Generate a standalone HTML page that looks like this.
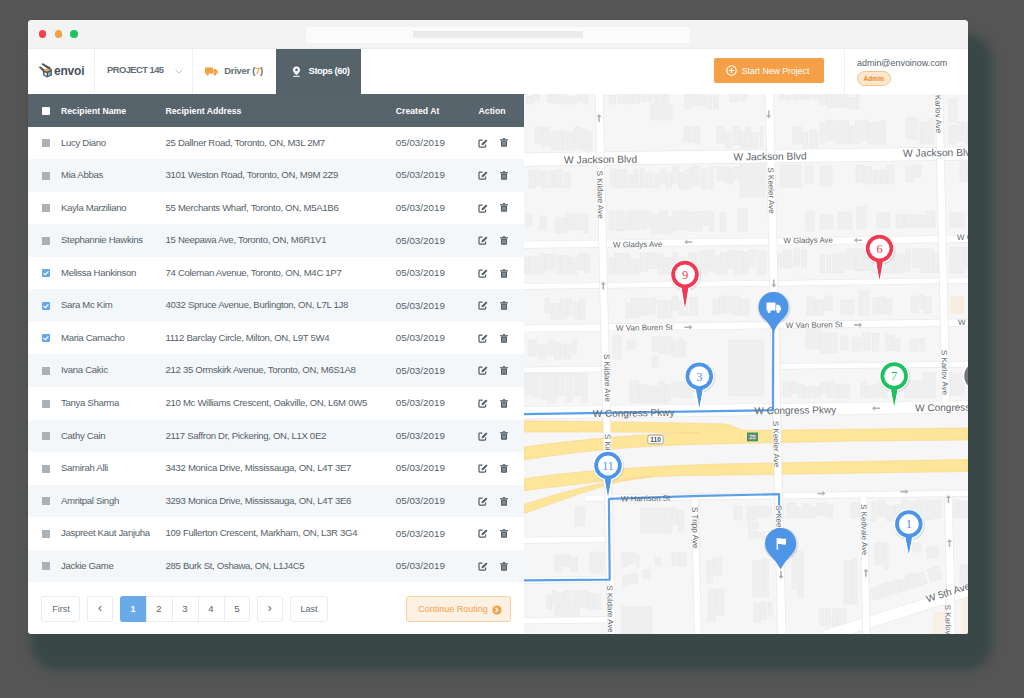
<!DOCTYPE html>
<html><head><meta charset="utf-8">
<style>
*{margin:0;padding:0;box-sizing:border-box}
html,body{width:1024px;height:698px;overflow:hidden;background:#555555;font-family:"Liberation Sans",sans-serif}
.abs{position:absolute}
#win{position:absolute;left:28px;top:20px;width:940px;height:614px;background:#fff;border-radius:4px 4px 3px 3px;;overflow:hidden}
#title{position:absolute;left:0;top:0;width:940px;height:29px;background:#f3f3f3;border-bottom:1px solid #ececec}
.dot{position:absolute;top:10.2px;width:7.6px;height:7.6px;border-radius:50%}
#addr{position:absolute;left:277.6px;top:6.6px;width:384.4px;height:16.4px;background:#fbfbfb;border-radius:2px}
#addr i{position:absolute;left:107.4px;top:4.7px;width:170px;height:7px;background:#ebebeb}
#nav{position:absolute;left:0;top:29px;width:940px;height:45px;background:#fff}
.vd{position:absolute;top:0;width:1px;height:45px;background:#eef0f2}
.navt{position:absolute;font-size:9.6px;color:#5d6970;white-space:nowrap;line-height:10px}
#thead{position:absolute;left:0;top:74px;width:496px;height:32.5px;background:#57646b}
.th{position:absolute;top:12px;font-size:8.7px;font-weight:bold;color:#fff;line-height:10px;white-space:nowrap}
.row{position:absolute;left:0;width:496px;height:32.6px}
.row.alt{background:#f4f7f9}
.td{position:absolute;font-size:9.6px;letter-spacing:-0.32px;color:#56626a;line-height:10px;white-space:nowrap;top:11px}
.cb{position:absolute;left:13.5px;top:12.5px;width:8px;height:8px}
#map{position:absolute;left:496px;top:74px;width:444px;height:540px;background:#f3f3f3;overflow:hidden}
.pg{position:absolute;top:575.8px;height:26.2px;border:1px solid #e8ecef;border-radius:3px;background:#fff;font-size:9px;color:#5e6a72;text-align:center;line-height:24px}
</style></head><body>
<div style="position:absolute;left:31px;top:34px;width:961px;height:636px;border-radius:26px;background:#394747;filter:blur(5px)"></div>
<div id="win">
  <div id="title">
    <div class="dot" style="left:10.9px;background:#f4404f"></div>
    <div class="dot" style="left:26.6px;background:#f5a043"></div>
    <div class="dot" style="left:42.2px;background:#1fc160"></div>
    <div id="addr"><i></i></div>
  </div>
  <div id="nav">
    <div class="vd" style="left:65.5px"></div>
    <div class="vd" style="left:163.8px"></div>
    <div class="vd" style="left:815.5px"></div>
    <!-- logo -->
    <svg class="abs" style="left:8px;top:11px" width="20" height="20" viewBox="0 0 20 20">
      <path d="M5,4 L7,3.3 L14.5,7.6 L12.5,9.2 Z" fill="#4a565e"/>
      <path d="M2.6,7 L4.6,6.4 L9.6,10.6 L7.4,11.8 Z" fill="#4a565e"/>
      <path d="M6.8,10.8 L14,7.8 L15.9,9.6 L15.9,15.4 L11,17.6 L7.2,15.2 Z" fill="#4a565e"/>
      <path d="M8.2,9.8 L10.8,8.4 L13.6,8.9 L14.4,10.3 L11.4,11.6 L8.1,11.1 Z" fill="#f5a043"/>
      <path d="M8.4,12.2 L10.8,13 L10.8,16.1 L8.4,15 Z" fill="#dfe5ea"/>
      <path d="M12,12.8 L14.6,11.7 L14.6,14.9 L12,16 Z" fill="#7ab8ee"/>
    </svg>
    <div class="navt" style="left:26px;top:17px;font-size:12px;font-weight:bold;color:#47535b;letter-spacing:-0.2px">envoi</div>
    <div class="navt" style="left:79px;top:15.8px;font-weight:bold;font-size:9.4px;letter-spacing:-0.55px;color:#626e76">PROJECT 145</div>
    <svg class="abs" style="left:147px;top:19.8px" width="8" height="5" viewBox="0 0 8 5"><path d="M0.5 0.5 L4 4 L7.5 0.5" fill="none" stroke="#b9c0c5" stroke-width="1"/></svg>
    <!-- truck -->
    <svg class="abs" style="left:177px;top:17.5px" width="13" height="9" viewBox="0 0 13 9">
      <rect x="0" y="0.5" width="8" height="6" fill="#f5a043"/>
      <path d="M8.5 2 L11 2 L12.8 4.5 L12.8 6.5 L8.5 6.5 Z" fill="#f5a043"/>
      <circle cx="2.5" cy="7.2" r="1.3" fill="#f5a043"/><circle cx="10" cy="7.2" r="1.3" fill="#f5a043"/>
    </svg>
    <div class="navt" style="left:196.3px;top:16.5px;color:#626e76;font-weight:bold;font-size:9.4px;letter-spacing:-0.25px">Driver (<span style="color:#f5a043">7</span>)</div>
    <!-- active tab -->
    <div class="abs" style="left:248px;top:0;width:85px;height:45px;background:#56636b">
      <svg class="abs" style="left:15.5px;top:17px" width="9" height="11" viewBox="0 0 9 11">
        <path d="M4.5 0.5 C2.3 0.5 1 2.1 1 3.9 C1 6.2 4.5 9 4.5 9 C4.5 9 8 6.2 8 3.9 C8 2.1 6.7 0.5 4.5 0.5 Z" fill="#fff"/>
        <circle cx="4.5" cy="3.9" r="1.3" fill="#56636b"/>
        <rect x="1.3" y="9.8" width="6.4" height="1" fill="#fff"/>
      </svg>
      <div class="navt" style="left:32.6px;top:16.7px;color:#fff;font-weight:bold;font-size:9.4px;letter-spacing:-0.45px">Stops (60)</div>
    </div>
    <!-- start new project -->
    <div class="abs" style="left:686px;top:9.2px;width:110px;height:25.3px;background:#f5a047;border-radius:2px">
      <svg class="abs" style="left:11.5px;top:7.2px" width="11" height="11" viewBox="0 0 11 11">
        <circle cx="5.5" cy="5.5" r="4.7" fill="none" stroke="#fff" stroke-width="1.1"/>
        <path d="M5.5 3 V8 M3 5.5 H8" stroke="#fff" stroke-width="1.2"/>
      </svg>
      <div class="navt" style="left:27.7px;top:8px;color:#fff;font-size:8.8px;letter-spacing:-0.05px">Start New Project</div>
    </div>
    <div class="navt" style="left:829px;top:8.8px;font-size:9px;letter-spacing:-0.03px;color:#56626a">admin@envoinow.com</div>
    <div class="abs" style="left:828.7px;top:22.2px;width:34.3px;height:15px;background:#fde8cf;border:1px solid #f7c489;border-radius:8px;font-size:6.6px;font-weight:bold;color:#ea8a2a;text-align:center;line-height:13px">Admin</div>
  </div>
  <!-- table header -->
  <div id="thead">
    <div class="abs" style="left:13.5px;top:12.5px;width:8px;height:8px;background:#fff;border-radius:1px"></div>
    <div class="th" style="left:33px">Recipient Name</div>
    <div class="th" style="left:137.5px">Recipient Address</div>
    <div class="th" style="left:367.8px">Created At</div>
    <div class="th" style="left:450.6px">Action</div>
  </div>
  <div id="rows"><div class="row" style="top:106.50px;height:32.57px"><div class="cb" style="background:#abb1b5"></div><div class="td" style="left:33px">Lucy Diano</div><div class="td" style="left:137.5px">25 Dallner Road, Toronto, ON, M3L 2M7</div><div class="td" style="left:367.8px;font-size:9.8px;letter-spacing:0;top:11.3px">05/03/2019</div><svg class="abs" style="left:450px;top:12px" width="10" height="9" viewBox="0 0 10 9"><path d="M4.5 1.2 H1.8 Q1 1.2 1 2 V7.3 Q1 8.1 1.8 8.1 H6.8 Q7.6 8.1 7.6 7.3 V5.5" fill="none" stroke="#505c64" stroke-width="1.2"/><path d="M3.6 6.2 L3.9 4.6 L8.1 0.4 L9.5 1.8 L5.3 6 Z" fill="#505c64"/></svg><svg class="abs" style="left:472.3px;top:11.8px" width="8" height="9" viewBox="0 0 8 9"><rect x="0" y="1.2" width="8" height="1.1" fill="#505c64"/><rect x="2.8" y="0.2" width="2.4" height="1.2" fill="#505c64"/><path d="M1 2.6 H7 V8 Q7 8.7 6.3 8.7 H1.7 Q1 8.7 1 8 Z" fill="#505c64"/><rect x="2.4" y="3.6" width="1.1" height="4" fill="#a9b0b5"/><rect x="4.5" y="3.6" width="1.1" height="4" fill="#a9b0b5"/></svg></div><div class="row alt" style="top:139.07px;height:32.57px"><div class="cb" style="background:#abb1b5"></div><div class="td" style="left:33px">Mia Abbas</div><div class="td" style="left:137.5px">3101 Weston Road, Toronto, ON, M9M 2Z9</div><div class="td" style="left:367.8px;font-size:9.8px;letter-spacing:0;top:11.3px">05/03/2019</div><svg class="abs" style="left:450px;top:12px" width="10" height="9" viewBox="0 0 10 9"><path d="M4.5 1.2 H1.8 Q1 1.2 1 2 V7.3 Q1 8.1 1.8 8.1 H6.8 Q7.6 8.1 7.6 7.3 V5.5" fill="none" stroke="#505c64" stroke-width="1.2"/><path d="M3.6 6.2 L3.9 4.6 L8.1 0.4 L9.5 1.8 L5.3 6 Z" fill="#505c64"/></svg><svg class="abs" style="left:472.3px;top:11.8px" width="8" height="9" viewBox="0 0 8 9"><rect x="0" y="1.2" width="8" height="1.1" fill="#505c64"/><rect x="2.8" y="0.2" width="2.4" height="1.2" fill="#505c64"/><path d="M1 2.6 H7 V8 Q7 8.7 6.3 8.7 H1.7 Q1 8.7 1 8 Z" fill="#505c64"/><rect x="2.4" y="3.6" width="1.1" height="4" fill="#a9b0b5"/><rect x="4.5" y="3.6" width="1.1" height="4" fill="#a9b0b5"/></svg></div><div class="row" style="top:171.64px;height:32.57px"><div class="cb" style="background:#abb1b5"></div><div class="td" style="left:33px">Kayla Marziliano</div><div class="td" style="left:137.5px">55 Merchants Wharf, Toronto, ON, M5A1B6</div><div class="td" style="left:367.8px;font-size:9.8px;letter-spacing:0;top:11.3px">05/03/2019</div><svg class="abs" style="left:450px;top:12px" width="10" height="9" viewBox="0 0 10 9"><path d="M4.5 1.2 H1.8 Q1 1.2 1 2 V7.3 Q1 8.1 1.8 8.1 H6.8 Q7.6 8.1 7.6 7.3 V5.5" fill="none" stroke="#505c64" stroke-width="1.2"/><path d="M3.6 6.2 L3.9 4.6 L8.1 0.4 L9.5 1.8 L5.3 6 Z" fill="#505c64"/></svg><svg class="abs" style="left:472.3px;top:11.8px" width="8" height="9" viewBox="0 0 8 9"><rect x="0" y="1.2" width="8" height="1.1" fill="#505c64"/><rect x="2.8" y="0.2" width="2.4" height="1.2" fill="#505c64"/><path d="M1 2.6 H7 V8 Q7 8.7 6.3 8.7 H1.7 Q1 8.7 1 8 Z" fill="#505c64"/><rect x="2.4" y="3.6" width="1.1" height="4" fill="#a9b0b5"/><rect x="4.5" y="3.6" width="1.1" height="4" fill="#a9b0b5"/></svg></div><div class="row alt" style="top:204.21px;height:32.57px"><div class="cb" style="background:#abb1b5"></div><div class="td" style="left:33px">Stephannie Hawkins</div><div class="td" style="left:137.5px">15 Neepawa Ave, Toronto, ON, M6R1V1</div><div class="td" style="left:367.8px;font-size:9.8px;letter-spacing:0;top:11.3px">05/03/2019</div><svg class="abs" style="left:450px;top:12px" width="10" height="9" viewBox="0 0 10 9"><path d="M4.5 1.2 H1.8 Q1 1.2 1 2 V7.3 Q1 8.1 1.8 8.1 H6.8 Q7.6 8.1 7.6 7.3 V5.5" fill="none" stroke="#505c64" stroke-width="1.2"/><path d="M3.6 6.2 L3.9 4.6 L8.1 0.4 L9.5 1.8 L5.3 6 Z" fill="#505c64"/></svg><svg class="abs" style="left:472.3px;top:11.8px" width="8" height="9" viewBox="0 0 8 9"><rect x="0" y="1.2" width="8" height="1.1" fill="#505c64"/><rect x="2.8" y="0.2" width="2.4" height="1.2" fill="#505c64"/><path d="M1 2.6 H7 V8 Q7 8.7 6.3 8.7 H1.7 Q1 8.7 1 8 Z" fill="#505c64"/><rect x="2.4" y="3.6" width="1.1" height="4" fill="#a9b0b5"/><rect x="4.5" y="3.6" width="1.1" height="4" fill="#a9b0b5"/></svg></div><div class="row" style="top:236.78px;height:32.57px"><svg class="cb" width="8" height="8" viewBox="0 0 8 8"><rect width="8" height="8" rx="0.8" fill="#68a8e6"/><path d="M1.6 4.1 L3.3 5.7 L6.4 2.3" fill="none" stroke="#fff" stroke-width="1.2"/></svg><div class="td" style="left:33px">Melissa Hankinson</div><div class="td" style="left:137.5px">74 Coleman Avenue, Toronto, ON, M4C 1P7</div><div class="td" style="left:367.8px;font-size:9.8px;letter-spacing:0;top:11.3px">05/03/2019</div><svg class="abs" style="left:450px;top:12px" width="10" height="9" viewBox="0 0 10 9"><path d="M4.5 1.2 H1.8 Q1 1.2 1 2 V7.3 Q1 8.1 1.8 8.1 H6.8 Q7.6 8.1 7.6 7.3 V5.5" fill="none" stroke="#505c64" stroke-width="1.2"/><path d="M3.6 6.2 L3.9 4.6 L8.1 0.4 L9.5 1.8 L5.3 6 Z" fill="#505c64"/></svg><svg class="abs" style="left:472.3px;top:11.8px" width="8" height="9" viewBox="0 0 8 9"><rect x="0" y="1.2" width="8" height="1.1" fill="#505c64"/><rect x="2.8" y="0.2" width="2.4" height="1.2" fill="#505c64"/><path d="M1 2.6 H7 V8 Q7 8.7 6.3 8.7 H1.7 Q1 8.7 1 8 Z" fill="#505c64"/><rect x="2.4" y="3.6" width="1.1" height="4" fill="#a9b0b5"/><rect x="4.5" y="3.6" width="1.1" height="4" fill="#a9b0b5"/></svg></div><div class="row alt" style="top:269.35px;height:32.57px"><svg class="cb" width="8" height="8" viewBox="0 0 8 8"><rect width="8" height="8" rx="0.8" fill="#68a8e6"/><path d="M1.6 4.1 L3.3 5.7 L6.4 2.3" fill="none" stroke="#fff" stroke-width="1.2"/></svg><div class="td" style="left:33px">Sara Mc Kim</div><div class="td" style="left:137.5px">4032 Spruce Avenue, Burlington, ON, L7L 1J8</div><div class="td" style="left:367.8px;font-size:9.8px;letter-spacing:0;top:11.3px">05/03/2019</div><svg class="abs" style="left:450px;top:12px" width="10" height="9" viewBox="0 0 10 9"><path d="M4.5 1.2 H1.8 Q1 1.2 1 2 V7.3 Q1 8.1 1.8 8.1 H6.8 Q7.6 8.1 7.6 7.3 V5.5" fill="none" stroke="#505c64" stroke-width="1.2"/><path d="M3.6 6.2 L3.9 4.6 L8.1 0.4 L9.5 1.8 L5.3 6 Z" fill="#505c64"/></svg><svg class="abs" style="left:472.3px;top:11.8px" width="8" height="9" viewBox="0 0 8 9"><rect x="0" y="1.2" width="8" height="1.1" fill="#505c64"/><rect x="2.8" y="0.2" width="2.4" height="1.2" fill="#505c64"/><path d="M1 2.6 H7 V8 Q7 8.7 6.3 8.7 H1.7 Q1 8.7 1 8 Z" fill="#505c64"/><rect x="2.4" y="3.6" width="1.1" height="4" fill="#a9b0b5"/><rect x="4.5" y="3.6" width="1.1" height="4" fill="#a9b0b5"/></svg></div><div class="row" style="top:301.92px;height:32.57px"><svg class="cb" width="8" height="8" viewBox="0 0 8 8"><rect width="8" height="8" rx="0.8" fill="#68a8e6"/><path d="M1.6 4.1 L3.3 5.7 L6.4 2.3" fill="none" stroke="#fff" stroke-width="1.2"/></svg><div class="td" style="left:33px">Maria Camacho</div><div class="td" style="left:137.5px">1112 Barclay Circle, Milton, ON, L9T 5W4</div><div class="td" style="left:367.8px;font-size:9.8px;letter-spacing:0;top:11.3px">05/03/2019</div><svg class="abs" style="left:450px;top:12px" width="10" height="9" viewBox="0 0 10 9"><path d="M4.5 1.2 H1.8 Q1 1.2 1 2 V7.3 Q1 8.1 1.8 8.1 H6.8 Q7.6 8.1 7.6 7.3 V5.5" fill="none" stroke="#505c64" stroke-width="1.2"/><path d="M3.6 6.2 L3.9 4.6 L8.1 0.4 L9.5 1.8 L5.3 6 Z" fill="#505c64"/></svg><svg class="abs" style="left:472.3px;top:11.8px" width="8" height="9" viewBox="0 0 8 9"><rect x="0" y="1.2" width="8" height="1.1" fill="#505c64"/><rect x="2.8" y="0.2" width="2.4" height="1.2" fill="#505c64"/><path d="M1 2.6 H7 V8 Q7 8.7 6.3 8.7 H1.7 Q1 8.7 1 8 Z" fill="#505c64"/><rect x="2.4" y="3.6" width="1.1" height="4" fill="#a9b0b5"/><rect x="4.5" y="3.6" width="1.1" height="4" fill="#a9b0b5"/></svg></div><div class="row alt" style="top:334.49px;height:32.57px"><div class="cb" style="background:#abb1b5"></div><div class="td" style="left:33px">Ivana Cakic</div><div class="td" style="left:137.5px">212 35 Ormskirk Avenue, Toronto, ON, M6S1A8</div><div class="td" style="left:367.8px;font-size:9.8px;letter-spacing:0;top:11.3px">05/03/2019</div><svg class="abs" style="left:450px;top:12px" width="10" height="9" viewBox="0 0 10 9"><path d="M4.5 1.2 H1.8 Q1 1.2 1 2 V7.3 Q1 8.1 1.8 8.1 H6.8 Q7.6 8.1 7.6 7.3 V5.5" fill="none" stroke="#505c64" stroke-width="1.2"/><path d="M3.6 6.2 L3.9 4.6 L8.1 0.4 L9.5 1.8 L5.3 6 Z" fill="#505c64"/></svg><svg class="abs" style="left:472.3px;top:11.8px" width="8" height="9" viewBox="0 0 8 9"><rect x="0" y="1.2" width="8" height="1.1" fill="#505c64"/><rect x="2.8" y="0.2" width="2.4" height="1.2" fill="#505c64"/><path d="M1 2.6 H7 V8 Q7 8.7 6.3 8.7 H1.7 Q1 8.7 1 8 Z" fill="#505c64"/><rect x="2.4" y="3.6" width="1.1" height="4" fill="#a9b0b5"/><rect x="4.5" y="3.6" width="1.1" height="4" fill="#a9b0b5"/></svg></div><div class="row" style="top:367.06px;height:32.57px"><div class="cb" style="background:#abb1b5"></div><div class="td" style="left:33px">Tanya Sharma</div><div class="td" style="left:137.5px">210 Mc Williams Crescent, Oakville, ON, L6M 0W5</div><div class="td" style="left:367.8px;font-size:9.8px;letter-spacing:0;top:11.3px">05/03/2019</div><svg class="abs" style="left:450px;top:12px" width="10" height="9" viewBox="0 0 10 9"><path d="M4.5 1.2 H1.8 Q1 1.2 1 2 V7.3 Q1 8.1 1.8 8.1 H6.8 Q7.6 8.1 7.6 7.3 V5.5" fill="none" stroke="#505c64" stroke-width="1.2"/><path d="M3.6 6.2 L3.9 4.6 L8.1 0.4 L9.5 1.8 L5.3 6 Z" fill="#505c64"/></svg><svg class="abs" style="left:472.3px;top:11.8px" width="8" height="9" viewBox="0 0 8 9"><rect x="0" y="1.2" width="8" height="1.1" fill="#505c64"/><rect x="2.8" y="0.2" width="2.4" height="1.2" fill="#505c64"/><path d="M1 2.6 H7 V8 Q7 8.7 6.3 8.7 H1.7 Q1 8.7 1 8 Z" fill="#505c64"/><rect x="2.4" y="3.6" width="1.1" height="4" fill="#a9b0b5"/><rect x="4.5" y="3.6" width="1.1" height="4" fill="#a9b0b5"/></svg></div><div class="row alt" style="top:399.63px;height:32.57px"><div class="cb" style="background:#abb1b5"></div><div class="td" style="left:33px">Cathy Cain</div><div class="td" style="left:137.5px">2117 Saffron Dr, Pickering, ON, L1X 0E2</div><div class="td" style="left:367.8px;font-size:9.8px;letter-spacing:0;top:11.3px">05/03/2019</div><svg class="abs" style="left:450px;top:12px" width="10" height="9" viewBox="0 0 10 9"><path d="M4.5 1.2 H1.8 Q1 1.2 1 2 V7.3 Q1 8.1 1.8 8.1 H6.8 Q7.6 8.1 7.6 7.3 V5.5" fill="none" stroke="#505c64" stroke-width="1.2"/><path d="M3.6 6.2 L3.9 4.6 L8.1 0.4 L9.5 1.8 L5.3 6 Z" fill="#505c64"/></svg><svg class="abs" style="left:472.3px;top:11.8px" width="8" height="9" viewBox="0 0 8 9"><rect x="0" y="1.2" width="8" height="1.1" fill="#505c64"/><rect x="2.8" y="0.2" width="2.4" height="1.2" fill="#505c64"/><path d="M1 2.6 H7 V8 Q7 8.7 6.3 8.7 H1.7 Q1 8.7 1 8 Z" fill="#505c64"/><rect x="2.4" y="3.6" width="1.1" height="4" fill="#a9b0b5"/><rect x="4.5" y="3.6" width="1.1" height="4" fill="#a9b0b5"/></svg></div><div class="row" style="top:432.20px;height:32.57px"><div class="cb" style="background:#abb1b5"></div><div class="td" style="left:33px">Samirah Alli</div><div class="td" style="left:137.5px">3432 Monica Drive, Mississauga, ON, L4T 3E7</div><div class="td" style="left:367.8px;font-size:9.8px;letter-spacing:0;top:11.3px">05/03/2019</div><svg class="abs" style="left:450px;top:12px" width="10" height="9" viewBox="0 0 10 9"><path d="M4.5 1.2 H1.8 Q1 1.2 1 2 V7.3 Q1 8.1 1.8 8.1 H6.8 Q7.6 8.1 7.6 7.3 V5.5" fill="none" stroke="#505c64" stroke-width="1.2"/><path d="M3.6 6.2 L3.9 4.6 L8.1 0.4 L9.5 1.8 L5.3 6 Z" fill="#505c64"/></svg><svg class="abs" style="left:472.3px;top:11.8px" width="8" height="9" viewBox="0 0 8 9"><rect x="0" y="1.2" width="8" height="1.1" fill="#505c64"/><rect x="2.8" y="0.2" width="2.4" height="1.2" fill="#505c64"/><path d="M1 2.6 H7 V8 Q7 8.7 6.3 8.7 H1.7 Q1 8.7 1 8 Z" fill="#505c64"/><rect x="2.4" y="3.6" width="1.1" height="4" fill="#a9b0b5"/><rect x="4.5" y="3.6" width="1.1" height="4" fill="#a9b0b5"/></svg></div><div class="row alt" style="top:464.77px;height:32.57px"><div class="cb" style="background:#abb1b5"></div><div class="td" style="left:33px">Amritpal Singh</div><div class="td" style="left:137.5px">3293 Monica Drive, Mississauga, ON, L4T 3E6</div><div class="td" style="left:367.8px;font-size:9.8px;letter-spacing:0;top:11.3px">05/03/2019</div><svg class="abs" style="left:450px;top:12px" width="10" height="9" viewBox="0 0 10 9"><path d="M4.5 1.2 H1.8 Q1 1.2 1 2 V7.3 Q1 8.1 1.8 8.1 H6.8 Q7.6 8.1 7.6 7.3 V5.5" fill="none" stroke="#505c64" stroke-width="1.2"/><path d="M3.6 6.2 L3.9 4.6 L8.1 0.4 L9.5 1.8 L5.3 6 Z" fill="#505c64"/></svg><svg class="abs" style="left:472.3px;top:11.8px" width="8" height="9" viewBox="0 0 8 9"><rect x="0" y="1.2" width="8" height="1.1" fill="#505c64"/><rect x="2.8" y="0.2" width="2.4" height="1.2" fill="#505c64"/><path d="M1 2.6 H7 V8 Q7 8.7 6.3 8.7 H1.7 Q1 8.7 1 8 Z" fill="#505c64"/><rect x="2.4" y="3.6" width="1.1" height="4" fill="#a9b0b5"/><rect x="4.5" y="3.6" width="1.1" height="4" fill="#a9b0b5"/></svg></div><div class="row" style="top:497.34px;height:32.57px"><div class="cb" style="background:#abb1b5"></div><div class="td" style="left:33px">Jaspreet Kaut Janjuha</div><div class="td" style="left:137.5px">109 Fullerton Crescent, Markham, ON, L3R 3G4</div><div class="td" style="left:367.8px;font-size:9.8px;letter-spacing:0;top:11.3px">05/03/2019</div><svg class="abs" style="left:450px;top:12px" width="10" height="9" viewBox="0 0 10 9"><path d="M4.5 1.2 H1.8 Q1 1.2 1 2 V7.3 Q1 8.1 1.8 8.1 H6.8 Q7.6 8.1 7.6 7.3 V5.5" fill="none" stroke="#505c64" stroke-width="1.2"/><path d="M3.6 6.2 L3.9 4.6 L8.1 0.4 L9.5 1.8 L5.3 6 Z" fill="#505c64"/></svg><svg class="abs" style="left:472.3px;top:11.8px" width="8" height="9" viewBox="0 0 8 9"><rect x="0" y="1.2" width="8" height="1.1" fill="#505c64"/><rect x="2.8" y="0.2" width="2.4" height="1.2" fill="#505c64"/><path d="M1 2.6 H7 V8 Q7 8.7 6.3 8.7 H1.7 Q1 8.7 1 8 Z" fill="#505c64"/><rect x="2.4" y="3.6" width="1.1" height="4" fill="#a9b0b5"/><rect x="4.5" y="3.6" width="1.1" height="4" fill="#a9b0b5"/></svg></div><div class="row alt" style="top:529.91px;height:32.57px"><div class="cb" style="background:#abb1b5"></div><div class="td" style="left:33px">Jackie Game</div><div class="td" style="left:137.5px">285 Burk St, Oshawa, ON, L1J4C5</div><div class="td" style="left:367.8px;font-size:9.8px;letter-spacing:0;top:11.3px">05/03/2019</div><svg class="abs" style="left:450px;top:12px" width="10" height="9" viewBox="0 0 10 9"><path d="M4.5 1.2 H1.8 Q1 1.2 1 2 V7.3 Q1 8.1 1.8 8.1 H6.8 Q7.6 8.1 7.6 7.3 V5.5" fill="none" stroke="#505c64" stroke-width="1.2"/><path d="M3.6 6.2 L3.9 4.6 L8.1 0.4 L9.5 1.8 L5.3 6 Z" fill="#505c64"/></svg><svg class="abs" style="left:472.3px;top:11.8px" width="8" height="9" viewBox="0 0 8 9"><rect x="0" y="1.2" width="8" height="1.1" fill="#505c64"/><rect x="2.8" y="0.2" width="2.4" height="1.2" fill="#505c64"/><path d="M1 2.6 H7 V8 Q7 8.7 6.3 8.7 H1.7 Q1 8.7 1 8 Z" fill="#505c64"/><rect x="2.4" y="3.6" width="1.1" height="4" fill="#a9b0b5"/><rect x="4.5" y="3.6" width="1.1" height="4" fill="#a9b0b5"/></svg></div></div>
  <!-- pagination -->
  <div class="pg" style="left:13.4px;width:39.1px">First</div>
  <div class="pg" style="left:59px;width:26px;font-size:12px;line-height:23px">&#8249;</div>
  <div class="pg" style="left:92px;width:130px;padding:0"></div>
  <div class="abs" style="left:92px;top:575.8px;width:26px;height:26.2px;background:#6aaae8;border-radius:3px 0 0 3px;color:#fff;font-size:9px;font-weight:bold;text-align:center;line-height:26px">1</div>
  <div class="abs" style="left:118px;top:575.8px;width:1px;height:26.2px;background:#e8ecef"></div>
  <div class="abs" style="left:144px;top:575.8px;width:1px;height:26.2px;background:#e8ecef"></div>
  <div class="abs" style="left:170px;top:575.8px;width:1px;height:26.2px;background:#e8ecef"></div>
  <div class="abs" style="left:196px;top:575.8px;width:1px;height:26.2px;background:#e8ecef"></div>
  <div class="abs" style="left:118px;top:575.8px;width:26px;font-size:9.5px;color:#56626a;text-align:center;line-height:25px">2</div>
  <div class="abs" style="left:144px;top:575.8px;width:26px;font-size:9.5px;color:#56626a;text-align:center;line-height:25px">3</div>
  <div class="abs" style="left:170px;top:575.8px;width:26px;font-size:9.5px;color:#56626a;text-align:center;line-height:25px">4</div>
  <div class="abs" style="left:196px;top:575.8px;width:26px;font-size:9.5px;color:#56626a;text-align:center;line-height:25px">5</div>
  <div class="pg" style="left:228.8px;width:26px;font-size:12px;line-height:23px">&#8250;</div>
  <div class="pg" style="left:261.6px;width:38.9px">Last</div>
  <div class="pg" style="left:378.4px;width:104.2px;background:#fdf1e3;border-color:#f8cf9e;color:#f5a047;text-align:left;padding-left:10.9px">Continue Routing
    <svg class="abs" style="left:85px;top:8px" width="10" height="10" viewBox="0 0 10 10"><circle cx="5" cy="5" r="4.6" fill="#f5a047"/><path d="M3.5 2.8 L5.8 5 L3.5 7.2" fill="none" stroke="#fff" stroke-width="1.3"/></svg>
  </div>
  <div id="map"><svg width="444" height="540" viewBox="0 0 444 540" style="position:absolute;left:0;top:0;font-family:'Liberation Sans',sans-serif"><rect width="444" height="540" fill="#f6f6f6"/>
<rect x="2.0" y="2.5" width="5.6" height="7.5" fill="#efefef" stroke="#e8e8e8" stroke-width="0.5"/>
<rect x="8.3" y="0.0" width="6.7" height="8.1" fill="#efefef" stroke="#e8e8e8" stroke-width="0.5"/>
<rect x="23.0" y="0.0" width="4.2" height="8.3" fill="#efefef" stroke="#e8e8e8" stroke-width="0.5"/>
<rect x="27.9" y="0.0" width="6.1" height="9.5" fill="#efefef" stroke="#e8e8e8" stroke-width="0.5"/>
<rect x="34.9" y="0.2" width="7.1" height="9.8" fill="#efefef" stroke="#e8e8e8" stroke-width="0.5"/>
<rect x="43.2" y="2.9" width="8.9" height="7.1" fill="#efefef" stroke="#e8e8e8" stroke-width="0.5"/>
<rect x="53.1" y="0.0" width="4.7" height="7.4" fill="#efefef" stroke="#e8e8e8" stroke-width="0.5"/>
<rect x="59.6" y="1.3" width="4.4" height="8.7" fill="#efefef" stroke="#e8e8e8" stroke-width="0.5"/>
<rect x="11.0" y="33.0" width="6.7" height="16.5" fill="#efefef" stroke="#e8e8e8" stroke-width="0.5"/>
<rect x="18.6" y="33.0" width="7.4" height="19.1" fill="#efefef" stroke="#e8e8e8" stroke-width="0.5"/>
<rect x="27.4" y="37.8" width="6.3" height="18.2" fill="#efefef" stroke="#e8e8e8" stroke-width="0.5"/>
<rect x="35.3" y="35.9" width="5.2" height="20.1" fill="#efefef" stroke="#e8e8e8" stroke-width="0.5"/>
<rect x="42.3" y="37.9" width="7.6" height="18.1" fill="#efefef" stroke="#e8e8e8" stroke-width="0.5"/>
<rect x="50.8" y="33.0" width="6.1" height="21.3" fill="#efefef" stroke="#e8e8e8" stroke-width="0.5"/>
<rect x="58.1" y="35.3" width="4.2" height="20.7" fill="#efefef" stroke="#e8e8e8" stroke-width="0.5"/>
<rect x="63.7" y="37.7" width="4.3" height="18.3" fill="#efefef" stroke="#e8e8e8" stroke-width="0.5"/>
<rect x="85.0" y="1.6" width="6.9" height="8.4" fill="#efefef" stroke="#e8e8e8" stroke-width="0.5"/>
<rect x="93.8" y="0.0" width="6.4" height="9.0" fill="#efefef" stroke="#e8e8e8" stroke-width="0.5"/>
<rect x="101.8" y="0.0" width="7.2" height="10.0" fill="#efefef" stroke="#e8e8e8" stroke-width="0.5"/>
<rect x="110.0" y="0.0" width="5.9" height="9.0" fill="#efefef" stroke="#e8e8e8" stroke-width="0.5"/>
<rect x="117.2" y="0.0" width="4.8" height="7.4" fill="#efefef" stroke="#e8e8e8" stroke-width="0.5"/>
<rect x="123.7" y="0.0" width="4.6" height="7.7" fill="#efefef" stroke="#e8e8e8" stroke-width="0.5"/>
<rect x="130.2" y="1.7" width="4.4" height="8.3" fill="#efefef" stroke="#e8e8e8" stroke-width="0.5"/>
<rect x="136.4" y="0.0" width="8.1" height="9.6" fill="#efefef" stroke="#e8e8e8" stroke-width="0.5"/>
<rect x="127" y="10" width="21" height="16" fill="#efefef" stroke="#e8e8e8" stroke-width="0.5"/>
<rect x="161.0" y="0.5" width="5.8" height="14.5" fill="#efefef" stroke="#e8e8e8" stroke-width="0.5"/>
<rect x="167.6" y="0.0" width="4.9" height="11.5" fill="#efefef" stroke="#e8e8e8" stroke-width="0.5"/>
<rect x="173.8" y="0.0" width="6.9" height="11.7" fill="#efefef" stroke="#e8e8e8" stroke-width="0.5"/>
<rect x="181.9" y="2.0" width="5.8" height="13.0" fill="#efefef" stroke="#e8e8e8" stroke-width="0.5"/>
<rect x="189.3" y="1.7" width="4.7" height="13.3" fill="#efefef" stroke="#e8e8e8" stroke-width="0.5"/>
<rect x="206.0" y="0.5" width="8.5" height="7.5" fill="#efefef" stroke="#e8e8e8" stroke-width="0.5"/>
<rect x="216.2" y="0.0" width="6.0" height="6.6" fill="#efefef" stroke="#e8e8e8" stroke-width="0.5"/>
<rect x="160.0" y="33.0" width="4.3" height="15.1" fill="#efefef" stroke="#e8e8e8" stroke-width="0.5"/>
<rect x="165.1" y="33.0" width="5.7" height="15.0" fill="#efefef" stroke="#e8e8e8" stroke-width="0.5"/>
<rect x="171.7" y="33.0" width="4.3" height="17.0" fill="#efefef" stroke="#e8e8e8" stroke-width="0.5"/>
<rect x="193.0" y="33.0" width="7.1" height="15.6" fill="#efefef" stroke="#e8e8e8" stroke-width="0.5"/>
<rect x="201.2" y="38.5" width="5.8" height="15.5" fill="#efefef" stroke="#e8e8e8" stroke-width="0.5"/>
<rect x="209.0" y="33.0" width="6.3" height="17.7" fill="#efefef" stroke="#e8e8e8" stroke-width="0.5"/>
<rect x="216.0" y="37.6" width="5.7" height="16.4" fill="#efefef" stroke="#e8e8e8" stroke-width="0.5"/>
<rect x="222.6" y="33.3" width="4.1" height="20.7" fill="#efefef" stroke="#e8e8e8" stroke-width="0.5"/>
<rect x="227.5" y="39.1" width="6.7" height="14.9" fill="#efefef" stroke="#e8e8e8" stroke-width="0.5"/>
<rect x="236.2" y="33.0" width="2.8" height="19.1" fill="#efefef" stroke="#e8e8e8" stroke-width="0.5"/>
<rect x="255.0" y="0.4" width="4.8" height="5.6" fill="#efefef" stroke="#e8e8e8" stroke-width="0.5"/>
<rect x="261.5" y="1.4" width="5.6" height="4.6" fill="#efefef" stroke="#e8e8e8" stroke-width="0.5"/>
<rect x="269.2" y="0.3" width="8.3" height="5.7" fill="#efefef" stroke="#e8e8e8" stroke-width="0.5"/>
<rect x="279.1" y="0.0" width="5.1" height="5.1" fill="#efefef" stroke="#e8e8e8" stroke-width="0.5"/>
<rect x="284.8" y="0.0" width="4.1" height="4.7" fill="#efefef" stroke="#e8e8e8" stroke-width="0.5"/>
<rect x="290.5" y="1.0" width="5.5" height="5.0" fill="#efefef" stroke="#e8e8e8" stroke-width="0.5"/>
<rect x="269.0" y="33.0" width="8.8" height="17.0" fill="#efefef" stroke="#e8e8e8" stroke-width="0.5"/>
<rect x="278.7" y="38.0" width="5.0" height="16.0" fill="#efefef" stroke="#e8e8e8" stroke-width="0.5"/>
<rect x="285.5" y="36.3" width="8.2" height="17.7" fill="#efefef" stroke="#e8e8e8" stroke-width="0.5"/>
<rect x="296.0" y="28.4" width="4.4" height="21.6" fill="#efefef" stroke="#e8e8e8" stroke-width="0.5"/>
<rect x="302.1" y="26.0" width="7.8" height="20.2" fill="#efefef" stroke="#e8e8e8" stroke-width="0.5"/>
<rect x="311.6" y="27.4" width="5.7" height="22.6" fill="#efefef" stroke="#e8e8e8" stroke-width="0.5"/>
<rect x="318.4" y="26.4" width="6.0" height="23.6" fill="#efefef" stroke="#e8e8e8" stroke-width="0.5"/>
<rect x="325.2" y="32.1" width="4.6" height="17.9" fill="#efefef" stroke="#e8e8e8" stroke-width="0.5"/>
<rect x="331.6" y="27.2" width="4.7" height="22.8" fill="#efefef" stroke="#e8e8e8" stroke-width="0.5"/>
<rect x="337.9" y="26.0" width="5.8" height="20.8" fill="#efefef" stroke="#e8e8e8" stroke-width="0.5"/>
<rect x="344.2" y="28.5" width="8.9" height="21.5" fill="#efefef" stroke="#e8e8e8" stroke-width="0.5"/>
<rect x="355.0" y="26.9" width="6.2" height="23.1" fill="#efefef" stroke="#e8e8e8" stroke-width="0.5"/>
<rect x="382.0" y="24.0" width="5.3" height="20.5" fill="#efefef" stroke="#e8e8e8" stroke-width="0.5"/>
<rect x="388.7" y="24.0" width="5.3" height="21.5" fill="#efefef" stroke="#e8e8e8" stroke-width="0.5"/>
<rect x="395.9" y="28.2" width="5.8" height="21.8" fill="#efefef" stroke="#e8e8e8" stroke-width="0.5"/>
<rect x="403.5" y="24.6" width="6.1" height="25.4" fill="#efefef" stroke="#e8e8e8" stroke-width="0.5"/>
<rect x="296.0" y="0.0" width="6.6" height="10.6" fill="#efefef" stroke="#e8e8e8" stroke-width="0.5"/>
<rect x="303.5" y="0.0" width="4.0" height="14.1" fill="#efefef" stroke="#e8e8e8" stroke-width="0.5"/>
<rect x="308.8" y="0.0" width="7.6" height="13.0" fill="#efefef" stroke="#e8e8e8" stroke-width="0.5"/>
<rect x="317.7" y="0.0" width="6.8" height="14.0" fill="#efefef" stroke="#e8e8e8" stroke-width="0.5"/>
<rect x="325.9" y="3.3" width="5.2" height="11.7" fill="#efefef" stroke="#e8e8e8" stroke-width="0.5"/>
<rect x="332.4" y="1.1" width="2.6" height="13.9" fill="#efefef" stroke="#e8e8e8" stroke-width="0.5"/>
<rect x="425.0" y="31.3" width="7.1" height="18.7" fill="#efefef" stroke="#e8e8e8" stroke-width="0.5"/>
<rect x="433.6" y="28.0" width="6.3" height="18.9" fill="#efefef" stroke="#e8e8e8" stroke-width="0.5"/>
<rect x="441.8" y="28.8" width="2.2" height="21.2" fill="#efefef" stroke="#e8e8e8" stroke-width="0.5"/>
<rect x="425" y="5" width="8" height="23" fill="#efefef" stroke="#e8e8e8" stroke-width="0.5"/>
<rect x="5.0" y="76.3" width="6.8" height="17.7" fill="#efefef" stroke="#e8e8e8" stroke-width="0.5"/>
<rect x="12.6" y="76.0" width="4.6" height="15.0" fill="#efefef" stroke="#e8e8e8" stroke-width="0.5"/>
<rect x="18.1" y="77.8" width="4.4" height="16.2" fill="#efefef" stroke="#e8e8e8" stroke-width="0.5"/>
<rect x="24.4" y="77.5" width="4.8" height="16.5" fill="#efefef" stroke="#e8e8e8" stroke-width="0.5"/>
<rect x="29.9" y="76.0" width="8.4" height="17.8" fill="#efefef" stroke="#e8e8e8" stroke-width="0.5"/>
<rect x="40.3" y="78.8" width="6.0" height="15.2" fill="#efefef" stroke="#e8e8e8" stroke-width="0.5"/>
<rect x="2" y="120" width="6" height="12" fill="#efefef" stroke="#e8e8e8" stroke-width="0.5"/>
<rect x="16" y="122" width="6" height="14" fill="#efefef" stroke="#e8e8e8" stroke-width="0.5"/>
<rect x="31.0" y="123.2" width="4.8" height="15.8" fill="#efefef" stroke="#e8e8e8" stroke-width="0.5"/>
<rect x="36.9" y="123.9" width="5.0" height="15.1" fill="#efefef" stroke="#e8e8e8" stroke-width="0.5"/>
<rect x="42.5" y="120.0" width="6.8" height="15.8" fill="#efefef" stroke="#e8e8e8" stroke-width="0.5"/>
<rect x="50.3" y="120.0" width="7.1" height="16.2" fill="#efefef" stroke="#e8e8e8" stroke-width="0.5"/>
<rect x="59.4" y="120.0" width="4.6" height="18.8" fill="#efefef" stroke="#e8e8e8" stroke-width="0.5"/>
<rect x="86.0" y="75.0" width="4.2" height="17.7" fill="#efefef" stroke="#e8e8e8" stroke-width="0.5"/>
<rect x="91.0" y="75.5" width="6.1" height="18.5" fill="#efefef" stroke="#e8e8e8" stroke-width="0.5"/>
<rect x="98.1" y="75.5" width="4.7" height="18.5" fill="#efefef" stroke="#e8e8e8" stroke-width="0.5"/>
<rect x="104.4" y="80.4" width="4.4" height="13.6" fill="#efefef" stroke="#e8e8e8" stroke-width="0.5"/>
<rect x="110.0" y="75.4" width="4.4" height="18.6" fill="#efefef" stroke="#e8e8e8" stroke-width="0.5"/>
<rect x="116.1" y="75.0" width="4.4" height="18.2" fill="#efefef" stroke="#e8e8e8" stroke-width="0.5"/>
<rect x="122.3" y="78.8" width="6.3" height="15.2" fill="#efefef" stroke="#e8e8e8" stroke-width="0.5"/>
<rect x="130.5" y="80.0" width="5.3" height="14.0" fill="#efefef" stroke="#e8e8e8" stroke-width="0.5"/>
<rect x="136.8" y="75.0" width="4.5" height="14.2" fill="#efefef" stroke="#e8e8e8" stroke-width="0.5"/>
<rect x="142.2" y="79.0" width="5.6" height="15.0" fill="#efefef" stroke="#e8e8e8" stroke-width="0.5"/>
<rect x="148.0" y="72.0" width="6.5" height="17.3" fill="#efefef" stroke="#e8e8e8" stroke-width="0.5"/>
<rect x="155.1" y="78.8" width="5.3" height="16.2" fill="#efefef" stroke="#e8e8e8" stroke-width="0.5"/>
<rect x="161.7" y="75.6" width="4.9" height="19.4" fill="#efefef" stroke="#e8e8e8" stroke-width="0.5"/>
<rect x="167.4" y="72.0" width="8.1" height="19.1" fill="#efefef" stroke="#e8e8e8" stroke-width="0.5"/>
<rect x="177.3" y="75.4" width="6.0" height="19.6" fill="#efefef" stroke="#e8e8e8" stroke-width="0.5"/>
<rect x="185.2" y="73.2" width="3.8" height="21.8" fill="#efefef" stroke="#e8e8e8" stroke-width="0.5"/>
<rect x="193.0" y="73.0" width="6.0" height="13.7" fill="#efefef" stroke="#e8e8e8" stroke-width="0.5"/>
<rect x="199.8" y="73.0" width="4.4" height="15.7" fill="#efefef" stroke="#e8e8e8" stroke-width="0.5"/>
<rect x="205.0" y="73.8" width="4.4" height="16.2" fill="#efefef" stroke="#e8e8e8" stroke-width="0.5"/>
<rect x="210.9" y="73.0" width="4.1" height="13.1" fill="#efefef" stroke="#e8e8e8" stroke-width="0.5"/>
<rect x="216" y="68" width="25" height="35" fill="#efefef" stroke="#e8e8e8" stroke-width="0.5"/>
<rect x="85.0" y="117.0" width="4.8" height="19.2" fill="#efefef" stroke="#e8e8e8" stroke-width="0.5"/>
<rect x="91.7" y="117.0" width="8.9" height="19.9" fill="#efefef" stroke="#e8e8e8" stroke-width="0.5"/>
<rect x="102.5" y="117.0" width="5.5" height="18.6" fill="#efefef" stroke="#e8e8e8" stroke-width="0.5"/>
<rect x="109.2" y="117.0" width="6.4" height="19.6" fill="#efefef" stroke="#e8e8e8" stroke-width="0.5"/>
<rect x="116.9" y="117.0" width="4.0" height="17.9" fill="#efefef" stroke="#e8e8e8" stroke-width="0.5"/>
<rect x="122.1" y="117.0" width="4.2" height="16.3" fill="#efefef" stroke="#e8e8e8" stroke-width="0.5"/>
<rect x="127.2" y="120.2" width="6.9" height="19.8" fill="#efefef" stroke="#e8e8e8" stroke-width="0.5"/>
<rect x="135.7" y="117.0" width="7.6" height="22.2" fill="#efefef" stroke="#e8e8e8" stroke-width="0.5"/>
<rect x="144.3" y="122.9" width="3.7" height="17.1" fill="#efefef" stroke="#e8e8e8" stroke-width="0.5"/>
<rect x="148.0" y="118.0" width="4.2" height="19.0" fill="#efefef" stroke="#e8e8e8" stroke-width="0.5"/>
<rect x="153.7" y="117.0" width="7.7" height="18.9" fill="#efefef" stroke="#e8e8e8" stroke-width="0.5"/>
<rect x="162.7" y="118.0" width="6.5" height="19.0" fill="#efefef" stroke="#e8e8e8" stroke-width="0.5"/>
<rect x="171.0" y="117.6" width="6.9" height="19.4" fill="#efefef" stroke="#e8e8e8" stroke-width="0.5"/>
<rect x="179.5" y="117.0" width="5.1" height="14.2" fill="#efefef" stroke="#e8e8e8" stroke-width="0.5"/>
<rect x="185.7" y="118.0" width="4.3" height="19.0" fill="#efefef" stroke="#e8e8e8" stroke-width="0.5"/>
<rect x="196" y="119" width="6" height="18" fill="#efefef" stroke="#e8e8e8" stroke-width="0.5"/>
<rect x="214" y="115" width="9" height="22" fill="#efefef" stroke="#e8e8e8" stroke-width="0.5"/>
<rect x="256" y="71" width="21" height="22" fill="#efefef" stroke="#e8e8e8" stroke-width="0.5"/>
<rect x="281" y="72" width="8" height="17" fill="#efefef" stroke="#e8e8e8" stroke-width="0.5"/>
<rect x="282" y="117" width="8" height="20" fill="#efefef" stroke="#e8e8e8" stroke-width="0.5"/>
<rect x="296" y="72" width="12" height="20" fill="#efefef" stroke="#e8e8e8" stroke-width="0.5"/>
<rect x="332.0" y="71.0" width="7.1" height="17.2" fill="#efefef" stroke="#e8e8e8" stroke-width="0.5"/>
<rect x="339.7" y="72.4" width="8.0" height="17.6" fill="#efefef" stroke="#e8e8e8" stroke-width="0.5"/>
<rect x="349.1" y="76.3" width="7.3" height="13.7" fill="#efefef" stroke="#e8e8e8" stroke-width="0.5"/>
<rect x="357.3" y="75.2" width="4.4" height="14.8" fill="#efefef" stroke="#e8e8e8" stroke-width="0.5"/>
<rect x="362.6" y="71.0" width="7.7" height="18.9" fill="#efefef" stroke="#e8e8e8" stroke-width="0.5"/>
<rect x="382.0" y="72.6" width="6.4" height="15.4" fill="#efefef" stroke="#e8e8e8" stroke-width="0.5"/>
<rect x="389.9" y="71.0" width="7.1" height="12.3" fill="#efefef" stroke="#e8e8e8" stroke-width="0.5"/>
<rect x="296" y="121" width="13" height="14" fill="#efefef" stroke="#e8e8e8" stroke-width="0.5"/>
<rect x="314" y="118" width="14" height="17" fill="#efefef" stroke="#e8e8e8" stroke-width="0.5"/>
<rect x="333" y="113" width="9" height="22" fill="#efefef" stroke="#e8e8e8" stroke-width="0.5"/>
<rect x="353" y="119" width="13" height="15" fill="#efefef" stroke="#e8e8e8" stroke-width="0.5"/>
<rect x="372.0" y="120.5" width="7.7" height="13.5" fill="#efefef" stroke="#e8e8e8" stroke-width="0.5"/>
<rect x="380.3" y="120.7" width="4.3" height="13.3" fill="#efefef" stroke="#e8e8e8" stroke-width="0.5"/>
<rect x="386.2" y="120.6" width="7.4" height="13.4" fill="#efefef" stroke="#e8e8e8" stroke-width="0.5"/>
<rect x="394.8" y="121.5" width="6.3" height="12.5" fill="#efefef" stroke="#e8e8e8" stroke-width="0.5"/>
<rect x="402.0" y="117.0" width="8.9" height="16.7" fill="#efefef" stroke="#e8e8e8" stroke-width="0.5"/>
<rect x="436" y="68" width="8" height="20" fill="#efefef" stroke="#e8e8e8" stroke-width="0.5"/>
<rect x="426.0" y="119.0" width="8.1" height="14.9" fill="#efefef" stroke="#e8e8e8" stroke-width="0.5"/>
<rect x="435.1" y="119.0" width="5.0" height="14.8" fill="#efefef" stroke="#e8e8e8" stroke-width="0.5"/>
<rect x="0.0" y="162.9" width="4.7" height="17.1" fill="#efefef" stroke="#e8e8e8" stroke-width="0.5"/>
<rect x="5.5" y="162.9" width="8.1" height="17.1" fill="#efefef" stroke="#e8e8e8" stroke-width="0.5"/>
<rect x="15.2" y="160.0" width="5.2" height="19.4" fill="#efefef" stroke="#e8e8e8" stroke-width="0.5"/>
<rect x="21.0" y="160.0" width="4.0" height="17.0" fill="#efefef" stroke="#e8e8e8" stroke-width="0.5"/>
<rect x="26.0" y="160.0" width="4.7" height="16.1" fill="#efefef" stroke="#e8e8e8" stroke-width="0.5"/>
<rect x="32.5" y="161.5" width="4.0" height="18.5" fill="#efefef" stroke="#e8e8e8" stroke-width="0.5"/>
<rect x="37.3" y="161.7" width="8.6" height="18.3" fill="#efefef" stroke="#e8e8e8" stroke-width="0.5"/>
<rect x="46.9" y="163.6" width="5.9" height="16.4" fill="#efefef" stroke="#e8e8e8" stroke-width="0.5"/>
<rect x="54.2" y="160.0" width="5.8" height="16.6" fill="#efefef" stroke="#e8e8e8" stroke-width="0.5"/>
<rect x="60.7" y="160.0" width="4.5" height="19.0" fill="#efefef" stroke="#e8e8e8" stroke-width="0.5"/>
<rect x="85.0" y="163.6" width="5.2" height="16.4" fill="#efefef" stroke="#e8e8e8" stroke-width="0.5"/>
<rect x="91.1" y="159.3" width="5.9" height="20.7" fill="#efefef" stroke="#e8e8e8" stroke-width="0.5"/>
<rect x="98.7" y="159.5" width="7.2" height="20.5" fill="#efefef" stroke="#e8e8e8" stroke-width="0.5"/>
<rect x="107.2" y="165.0" width="7.6" height="15.0" fill="#efefef" stroke="#e8e8e8" stroke-width="0.5"/>
<rect x="116.1" y="159.0" width="7.8" height="18.8" fill="#efefef" stroke="#e8e8e8" stroke-width="0.5"/>
<rect x="124.5" y="159.0" width="8.6" height="15.5" fill="#efefef" stroke="#e8e8e8" stroke-width="0.5"/>
<rect x="134.2" y="160.6" width="5.5" height="19.4" fill="#efefef" stroke="#e8e8e8" stroke-width="0.5"/>
<rect x="140.7" y="163.4" width="7.3" height="16.6" fill="#efefef" stroke="#e8e8e8" stroke-width="0.5"/>
<rect x="149.1" y="159.0" width="4.8" height="15.7" fill="#efefef" stroke="#e8e8e8" stroke-width="0.5"/>
<rect x="155.8" y="163.9" width="6.5" height="16.1" fill="#efefef" stroke="#e8e8e8" stroke-width="0.5"/>
<rect x="164.3" y="159.0" width="6.2" height="15.6" fill="#efefef" stroke="#e8e8e8" stroke-width="0.5"/>
<rect x="171.3" y="159.0" width="2.7" height="15.3" fill="#efefef" stroke="#e8e8e8" stroke-width="0.5"/>
<rect x="176.0" y="156.8" width="6.8" height="23.2" fill="#efefef" stroke="#e8e8e8" stroke-width="0.5"/>
<rect x="184.0" y="156.0" width="6.1" height="20.6" fill="#efefef" stroke="#e8e8e8" stroke-width="0.5"/>
<rect x="191.2" y="161.2" width="4.3" height="18.8" fill="#efefef" stroke="#e8e8e8" stroke-width="0.5"/>
<rect x="196.3" y="158.7" width="6.5" height="21.3" fill="#efefef" stroke="#e8e8e8" stroke-width="0.5"/>
<rect x="203.7" y="156.0" width="5.4" height="18.6" fill="#efefef" stroke="#e8e8e8" stroke-width="0.5"/>
<rect x="210.3" y="157.1" width="8.8" height="22.9" fill="#efefef" stroke="#e8e8e8" stroke-width="0.5"/>
<rect x="219.7" y="158.1" width="4.2" height="21.9" fill="#efefef" stroke="#e8e8e8" stroke-width="0.5"/>
<rect x="225.1" y="156.0" width="6.9" height="16.8" fill="#efefef" stroke="#e8e8e8" stroke-width="0.5"/>
<rect x="233.9" y="157.0" width="8.1" height="23.0" fill="#efefef" stroke="#e8e8e8" stroke-width="0.5"/>
<rect x="253.0" y="159.8" width="4.5" height="14.2" fill="#efefef" stroke="#e8e8e8" stroke-width="0.5"/>
<rect x="259.1" y="156.6" width="8.7" height="17.4" fill="#efefef" stroke="#e8e8e8" stroke-width="0.5"/>
<rect x="269.5" y="155.0" width="6.3" height="16.4" fill="#efefef" stroke="#e8e8e8" stroke-width="0.5"/>
<rect x="277.5" y="155.5" width="5.2" height="18.5" fill="#efefef" stroke="#e8e8e8" stroke-width="0.5"/>
<rect x="296.0" y="160.4" width="4.6" height="18.6" fill="#efefef" stroke="#e8e8e8" stroke-width="0.5"/>
<rect x="302.2" y="161.7" width="4.6" height="17.3" fill="#efefef" stroke="#e8e8e8" stroke-width="0.5"/>
<rect x="308.2" y="160.6" width="5.9" height="18.4" fill="#efefef" stroke="#e8e8e8" stroke-width="0.5"/>
<rect x="314.7" y="158.9" width="5.5" height="20.1" fill="#efefef" stroke="#e8e8e8" stroke-width="0.5"/>
<rect x="321.8" y="155.0" width="8.4" height="20.2" fill="#efefef" stroke="#e8e8e8" stroke-width="0.5"/>
<rect x="331.1" y="155.0" width="8.8" height="21.9" fill="#efefef" stroke="#e8e8e8" stroke-width="0.5"/>
<rect x="340.6" y="155.0" width="6.5" height="21.7" fill="#efefef" stroke="#e8e8e8" stroke-width="0.5"/>
<rect x="348.0" y="155.0" width="7.3" height="23.5" fill="#efefef" stroke="#e8e8e8" stroke-width="0.5"/>
<rect x="356.0" y="159.2" width="5.7" height="19.8" fill="#efefef" stroke="#e8e8e8" stroke-width="0.5"/>
<rect x="362.6" y="156.9" width="8.0" height="22.1" fill="#efefef" stroke="#e8e8e8" stroke-width="0.5"/>
<rect x="371.4" y="160.0" width="8.8" height="19.0" fill="#efefef" stroke="#e8e8e8" stroke-width="0.5"/>
<rect x="381.2" y="155.0" width="5.1" height="22.3" fill="#efefef" stroke="#e8e8e8" stroke-width="0.5"/>
<rect x="388.2" y="155.0" width="6.5" height="18.1" fill="#efefef" stroke="#e8e8e8" stroke-width="0.5"/>
<rect x="395.9" y="155.0" width="7.3" height="23.6" fill="#efefef" stroke="#e8e8e8" stroke-width="0.5"/>
<rect x="404.4" y="155.0" width="5.1" height="23.8" fill="#efefef" stroke="#e8e8e8" stroke-width="0.5"/>
<rect x="410.1" y="159.4" width="4.3" height="19.6" fill="#efefef" stroke="#e8e8e8" stroke-width="0.5"/>
<rect x="426.0" y="153.0" width="7.7" height="26.0" fill="#efefef" stroke="#e8e8e8" stroke-width="0.5"/>
<rect x="434.7" y="153.5" width="4.9" height="25.5" fill="#efefef" stroke="#e8e8e8" stroke-width="0.5"/>
<rect x="440.3" y="153.0" width="3.7" height="21.2" fill="#efefef" stroke="#e8e8e8" stroke-width="0.5"/>
<rect x="21.0" y="204.0" width="4.8" height="14.7" fill="#efefef" stroke="#e8e8e8" stroke-width="0.5"/>
<rect x="26.9" y="209.5" width="8.8" height="15.5" fill="#efefef" stroke="#e8e8e8" stroke-width="0.5"/>
<rect x="36.6" y="205.1" width="5.8" height="19.9" fill="#efefef" stroke="#e8e8e8" stroke-width="0.5"/>
<rect x="43.6" y="204.0" width="4.2" height="17.7" fill="#efefef" stroke="#e8e8e8" stroke-width="0.5"/>
<rect x="49.7" y="208.0" width="5.0" height="17.0" fill="#efefef" stroke="#e8e8e8" stroke-width="0.5"/>
<rect x="55.3" y="205.2" width="5.7" height="19.8" fill="#efefef" stroke="#e8e8e8" stroke-width="0.5"/>
<rect x="102.0" y="209.6" width="4.2" height="14.4" fill="#efefef" stroke="#e8e8e8" stroke-width="0.5"/>
<rect x="107.1" y="204.0" width="7.7" height="19.4" fill="#efefef" stroke="#e8e8e8" stroke-width="0.5"/>
<rect x="115.9" y="204.0" width="8.8" height="17.7" fill="#efefef" stroke="#e8e8e8" stroke-width="0.5"/>
<rect x="126.2" y="204.0" width="5.6" height="15.7" fill="#efefef" stroke="#e8e8e8" stroke-width="0.5"/>
<rect x="133.5" y="206.2" width="8.6" height="17.8" fill="#efefef" stroke="#e8e8e8" stroke-width="0.5"/>
<rect x="142.7" y="207.1" width="5.2" height="16.9" fill="#efefef" stroke="#e8e8e8" stroke-width="0.5"/>
<rect x="148.0" y="202.0" width="5.9" height="14.7" fill="#efefef" stroke="#e8e8e8" stroke-width="0.5"/>
<rect x="155.2" y="206.7" width="8.6" height="14.3" fill="#efefef" stroke="#e8e8e8" stroke-width="0.5"/>
<rect x="165.5" y="203.3" width="8.1" height="17.7" fill="#efefef" stroke="#e8e8e8" stroke-width="0.5"/>
<rect x="189.0" y="205.6" width="5.6" height="15.4" fill="#efefef" stroke="#e8e8e8" stroke-width="0.5"/>
<rect x="195.3" y="202.0" width="5.0" height="17.6" fill="#efefef" stroke="#e8e8e8" stroke-width="0.5"/>
<rect x="201.0" y="202.0" width="4.2" height="16.4" fill="#efefef" stroke="#e8e8e8" stroke-width="0.5"/>
<rect x="207.1" y="202.0" width="8.4" height="18.9" fill="#efefef" stroke="#e8e8e8" stroke-width="0.5"/>
<rect x="216.3" y="204.9" width="4.5" height="16.1" fill="#efefef" stroke="#e8e8e8" stroke-width="0.5"/>
<rect x="222.0" y="205.3" width="3.0" height="15.7" fill="#efefef" stroke="#e8e8e8" stroke-width="0.5"/>
<rect x="283.0" y="202.9" width="7.7" height="18.1" fill="#efefef" stroke="#e8e8e8" stroke-width="0.5"/>
<rect x="291.5" y="206.0" width="8.2" height="15.0" fill="#efefef" stroke="#e8e8e8" stroke-width="0.5"/>
<rect x="300.8" y="202.0" width="7.7" height="14.4" fill="#efefef" stroke="#e8e8e8" stroke-width="0.5"/>
<rect x="317" y="206" width="13" height="14" fill="#efefef" stroke="#e8e8e8" stroke-width="0.5"/>
<rect x="335" y="197" width="10" height="24" fill="#efefef" stroke="#e8e8e8" stroke-width="0.5"/>
<rect x="349.0" y="203.6" width="4.8" height="16.4" fill="#efefef" stroke="#e8e8e8" stroke-width="0.5"/>
<rect x="354.8" y="203.0" width="6.0" height="17.0" fill="#efefef" stroke="#e8e8e8" stroke-width="0.5"/>
<rect x="361.7" y="204.8" width="6.3" height="15.2" fill="#efefef" stroke="#e8e8e8" stroke-width="0.5"/>
<rect x="387.0" y="202.0" width="6.4" height="17.0" fill="#efefef" stroke="#e8e8e8" stroke-width="0.5"/>
<rect x="395.3" y="201.0" width="4.2" height="14.2" fill="#efefef" stroke="#e8e8e8" stroke-width="0.5"/>
<rect x="400.3" y="203.3" width="6.7" height="15.7" fill="#efefef" stroke="#e8e8e8" stroke-width="0.5"/>
<rect x="4.0" y="246.0" width="8.3" height="15.9" fill="#efefef" stroke="#e8e8e8" stroke-width="0.5"/>
<rect x="14.0" y="251.1" width="8.7" height="13.9" fill="#efefef" stroke="#e8e8e8" stroke-width="0.5"/>
<rect x="24.2" y="246.0" width="5.1" height="15.4" fill="#efefef" stroke="#e8e8e8" stroke-width="0.5"/>
<rect x="30.2" y="248.3" width="5.3" height="16.7" fill="#efefef" stroke="#e8e8e8" stroke-width="0.5"/>
<rect x="36.3" y="249.8" width="4.1" height="15.2" fill="#efefef" stroke="#e8e8e8" stroke-width="0.5"/>
<rect x="41.3" y="250.5" width="5.6" height="14.5" fill="#efefef" stroke="#e8e8e8" stroke-width="0.5"/>
<rect x="48.2" y="246.0" width="4.3" height="13.9" fill="#efefef" stroke="#e8e8e8" stroke-width="0.5"/>
<rect x="0.0" y="279.0" width="7.2" height="21.8" fill="#efefef" stroke="#e8e8e8" stroke-width="0.5"/>
<rect x="8.8" y="279.0" width="6.0" height="23.5" fill="#efefef" stroke="#e8e8e8" stroke-width="0.5"/>
<rect x="16.8" y="279.0" width="5.6" height="26.1" fill="#efefef" stroke="#e8e8e8" stroke-width="0.5"/>
<rect x="23.5" y="279.0" width="8.3" height="30.0" fill="#efefef" stroke="#e8e8e8" stroke-width="0.5"/>
<rect x="32.7" y="279.0" width="7.6" height="22.8" fill="#efefef" stroke="#e8e8e8" stroke-width="0.5"/>
<rect x="42.2" y="279.0" width="6.1" height="28.4" fill="#efefef" stroke="#e8e8e8" stroke-width="0.5"/>
<rect x="50.2" y="279.0" width="6.3" height="22.5" fill="#efefef" stroke="#e8e8e8" stroke-width="0.5"/>
<rect x="57.8" y="279.0" width="5.2" height="29.2" fill="#efefef" stroke="#e8e8e8" stroke-width="0.5"/>
<rect x="89" y="242" width="8" height="23" fill="#efefef" stroke="#e8e8e8" stroke-width="0.5"/>
<rect x="103" y="246" width="8" height="9" fill="#efefef" stroke="#e8e8e8" stroke-width="0.5"/>
<rect x="128.0" y="243.0" width="5.9" height="14.5" fill="#efefef" stroke="#e8e8e8" stroke-width="0.5"/>
<rect x="134.9" y="243.0" width="6.6" height="16.6" fill="#efefef" stroke="#e8e8e8" stroke-width="0.5"/>
<rect x="142.7" y="243.0" width="5.3" height="16.8" fill="#efefef" stroke="#e8e8e8" stroke-width="0.5"/>
<rect x="128" y="262" width="6" height="11" fill="#efefef" stroke="#e8e8e8" stroke-width="0.5"/>
<rect x="106.0" y="287.0" width="8.7" height="21.8" fill="#efefef" stroke="#e8e8e8" stroke-width="0.5"/>
<rect x="115.4" y="291.0" width="8.6" height="18.0" fill="#efefef" stroke="#e8e8e8" stroke-width="0.5"/>
<rect x="125.5" y="292.5" width="8.1" height="16.5" fill="#efefef" stroke="#e8e8e8" stroke-width="0.5"/>
<rect x="134.5" y="288.0" width="6.0" height="21.0" fill="#efefef" stroke="#e8e8e8" stroke-width="0.5"/>
<rect x="141.4" y="291.0" width="5.1" height="18.0" fill="#efefef" stroke="#e8e8e8" stroke-width="0.5"/>
<rect x="148.0" y="246.7" width="4.6" height="16.3" fill="#efefef" stroke="#e8e8e8" stroke-width="0.5"/>
<rect x="154.5" y="244.8" width="4.2" height="18.2" fill="#efefef" stroke="#e8e8e8" stroke-width="0.5"/>
<rect x="159.3" y="247.6" width="2.7" height="15.4" fill="#efefef" stroke="#e8e8e8" stroke-width="0.5"/>
<rect x="205" y="246" width="35" height="56" fill="#efefef" stroke="#e8e8e8" stroke-width="0.5"/>
<rect x="148.0" y="288.0" width="7.1" height="14.3" fill="#efefef" stroke="#e8e8e8" stroke-width="0.5"/>
<rect x="156.6" y="288.0" width="6.1" height="16.2" fill="#efefef" stroke="#e8e8e8" stroke-width="0.5"/>
<rect x="163.9" y="288.0" width="4.1" height="15.9" fill="#efefef" stroke="#e8e8e8" stroke-width="0.5"/>
<rect x="282" y="235" width="14" height="20" fill="#efefef" stroke="#e8e8e8" stroke-width="0.5"/>
<rect x="259.0" y="288.0" width="7.8" height="14.9" fill="#efefef" stroke="#e8e8e8" stroke-width="0.5"/>
<rect x="267.7" y="288.0" width="6.4" height="11.7" fill="#efefef" stroke="#e8e8e8" stroke-width="0.5"/>
<rect x="275.2" y="290.7" width="4.5" height="13.3" fill="#efefef" stroke="#e8e8e8" stroke-width="0.5"/>
<rect x="280.4" y="292.4" width="7.2" height="11.6" fill="#efefef" stroke="#e8e8e8" stroke-width="0.5"/>
<rect x="289.2" y="292.5" width="6.6" height="11.5" fill="#efefef" stroke="#e8e8e8" stroke-width="0.5"/>
<rect x="296" y="239" width="17" height="20" fill="#efefef" stroke="#e8e8e8" stroke-width="0.5"/>
<rect x="317" y="242" width="7" height="14" fill="#efefef" stroke="#e8e8e8" stroke-width="0.5"/>
<rect x="328.0" y="243.7" width="8.8" height="13.3" fill="#efefef" stroke="#e8e8e8" stroke-width="0.5"/>
<rect x="338.7" y="239.0" width="7.7" height="17.0" fill="#efefef" stroke="#e8e8e8" stroke-width="0.5"/>
<rect x="348.4" y="239.2" width="6.5" height="17.8" fill="#efefef" stroke="#e8e8e8" stroke-width="0.5"/>
<rect x="362.0" y="241.0" width="7.9" height="15.7" fill="#efefef" stroke="#e8e8e8" stroke-width="0.5"/>
<rect x="371.0" y="245.0" width="5.0" height="12.0" fill="#efefef" stroke="#e8e8e8" stroke-width="0.5"/>
<rect x="386.0" y="245.1" width="8.1" height="11.9" fill="#efefef" stroke="#e8e8e8" stroke-width="0.5"/>
<rect x="396.0" y="244.5" width="5.0" height="12.5" fill="#efefef" stroke="#e8e8e8" stroke-width="0.5"/>
<rect x="296.0" y="288.0" width="4.2" height="12.1" fill="#efefef" stroke="#e8e8e8" stroke-width="0.5"/>
<rect x="302.1" y="288.0" width="7.4" height="15.5" fill="#efefef" stroke="#e8e8e8" stroke-width="0.5"/>
<rect x="311.2" y="290.3" width="4.6" height="13.7" fill="#efefef" stroke="#e8e8e8" stroke-width="0.5"/>
<rect x="316.9" y="290.1" width="8.4" height="13.9" fill="#efefef" stroke="#e8e8e8" stroke-width="0.5"/>
<rect x="337.0" y="288.0" width="4.5" height="16.0" fill="#efefef" stroke="#e8e8e8" stroke-width="0.5"/>
<rect x="342.7" y="291.5" width="8.0" height="12.5" fill="#efefef" stroke="#e8e8e8" stroke-width="0.5"/>
<rect x="352.1" y="288.0" width="5.8" height="14.9" fill="#efefef" stroke="#e8e8e8" stroke-width="0.5"/>
<rect x="358.7" y="292.6" width="4.3" height="11.4" fill="#efefef" stroke="#e8e8e8" stroke-width="0.5"/>
<rect x="381" y="287" width="16" height="17" fill="#efefef" stroke="#e8e8e8" stroke-width="0.5"/>
<rect x="399" y="279" width="12" height="25" fill="#efefef" stroke="#e8e8e8" stroke-width="0.5"/>
<rect x="427" y="280" width="13" height="21" fill="#efefef" stroke="#e8e8e8" stroke-width="0.5"/>
<rect x="51" y="413" width="10" height="19" fill="#efefef" stroke="#e8e8e8" stroke-width="0.5"/>
<rect x="31.0" y="461.1" width="7.2" height="15.9" fill="#efefef" stroke="#e8e8e8" stroke-width="0.5"/>
<rect x="39.7" y="461.0" width="5.6" height="11.2" fill="#efefef" stroke="#e8e8e8" stroke-width="0.5"/>
<rect x="46.1" y="463.7" width="7.1" height="13.3" fill="#efefef" stroke="#e8e8e8" stroke-width="0.5"/>
<rect x="66" y="458" width="14" height="21" fill="#efefef" stroke="#e8e8e8" stroke-width="0.5"/>
<rect x="23.0" y="501.2" width="4.7" height="13.8" fill="#efefef" stroke="#e8e8e8" stroke-width="0.5"/>
<rect x="28.3" y="497.0" width="4.0" height="14.5" fill="#efefef" stroke="#e8e8e8" stroke-width="0.5"/>
<rect x="33.4" y="499.2" width="5.1" height="15.8" fill="#efefef" stroke="#e8e8e8" stroke-width="0.5"/>
<rect x="39.4" y="497.0" width="7.1" height="15.2" fill="#efefef" stroke="#e8e8e8" stroke-width="0.5"/>
<rect x="48.4" y="497.0" width="5.2" height="13.4" fill="#efefef" stroke="#e8e8e8" stroke-width="0.5"/>
<rect x="55.2" y="497.0" width="8.4" height="16.8" fill="#efefef" stroke="#e8e8e8" stroke-width="0.5"/>
<rect x="64.5" y="498.9" width="4.1" height="16.1" fill="#efefef" stroke="#e8e8e8" stroke-width="0.5"/>
<rect x="69.6" y="500.0" width="7.2" height="15.0" fill="#efefef" stroke="#e8e8e8" stroke-width="0.5"/>
<rect x="31" y="512" width="24" height="16" fill="#efefef" stroke="#e8e8e8" stroke-width="0.5"/>
<rect x="117" y="414" width="31" height="25" fill="#efefef" stroke="#e8e8e8" stroke-width="0.5"/>
<rect x="98.0" y="459.0" width="5.2" height="13.6" fill="#efefef" stroke="#e8e8e8" stroke-width="0.5"/>
<rect x="104.6" y="459.0" width="6.0" height="10.8" fill="#efefef" stroke="#e8e8e8" stroke-width="0.5"/>
<rect x="112.3" y="460.9" width="2.7" height="12.1" fill="#efefef" stroke="#e8e8e8" stroke-width="0.5"/>
<rect x="99.0" y="481.4" width="5.0" height="10.6" fill="#efefef" stroke="#e8e8e8" stroke-width="0.5"/>
<rect x="105.5" y="480.0" width="8.1" height="9.0" fill="#efefef" stroke="#e8e8e8" stroke-width="0.5"/>
<rect x="98" y="513" width="30" height="27" fill="#efefef" stroke="#e8e8e8" stroke-width="0.5"/>
<rect x="131" y="464" width="6" height="7" fill="#efefef" stroke="#e8e8e8" stroke-width="0.5"/>
<rect x="119" y="476" width="7" height="8" fill="#efefef" stroke="#e8e8e8" stroke-width="0.5"/>
<rect x="210" y="412" width="8" height="14" fill="#efefef" stroke="#e8e8e8" stroke-width="0.5"/>
<rect x="223.0" y="412.5" width="4.2" height="13.5" fill="#efefef" stroke="#e8e8e8" stroke-width="0.5"/>
<rect x="228.8" y="412.7" width="4.0" height="13.3" fill="#efefef" stroke="#e8e8e8" stroke-width="0.5"/>
<rect x="234.1" y="412.0" width="7.7" height="11.7" fill="#efefef" stroke="#e8e8e8" stroke-width="0.5"/>
<rect x="242.6" y="412.0" width="5.2" height="10.0" fill="#efefef" stroke="#e8e8e8" stroke-width="0.5"/>
<rect x="224" y="428" width="10" height="7" fill="#efefef" stroke="#e8e8e8" stroke-width="0.5"/>
<rect x="225.0" y="437.3" width="7.5" height="6.7" fill="#efefef" stroke="#e8e8e8" stroke-width="0.5"/>
<rect x="233.4" y="438.2" width="6.8" height="5.8" fill="#efefef" stroke="#e8e8e8" stroke-width="0.5"/>
<rect x="183.0" y="466.7" width="5.3" height="22.3" fill="#efefef" stroke="#e8e8e8" stroke-width="0.5"/>
<rect x="189.2" y="464.0" width="8.4" height="17.6" fill="#efefef" stroke="#e8e8e8" stroke-width="0.5"/>
<rect x="184.0" y="495.5" width="7.7" height="32.5" fill="#efefef" stroke="#e8e8e8" stroke-width="0.5"/>
<rect x="192.8" y="495.0" width="7.2" height="26.4" fill="#efefef" stroke="#e8e8e8" stroke-width="0.5"/>
<rect x="229.0" y="466.7" width="7.2" height="36.3" fill="#efefef" stroke="#e8e8e8" stroke-width="0.5"/>
<rect x="238.1" y="464.9" width="6.3" height="38.1" fill="#efefef" stroke="#e8e8e8" stroke-width="0.5"/>
<rect x="230.0" y="509.7" width="6.2" height="18.3" fill="#efefef" stroke="#e8e8e8" stroke-width="0.5"/>
<rect x="237.2" y="508.0" width="5.1" height="17.7" fill="#efefef" stroke="#e8e8e8" stroke-width="0.5"/>
<rect x="244.2" y="508.0" width="3.8" height="14.2" fill="#efefef" stroke="#e8e8e8" stroke-width="0.5"/>
<rect x="148.0" y="414.0" width="5.7" height="17.1" fill="#efefef" stroke="#e8e8e8" stroke-width="0.5"/>
<rect x="154.4" y="416.5" width="5.6" height="20.5" fill="#efefef" stroke="#e8e8e8" stroke-width="0.5"/>
<rect x="148.0" y="459.0" width="4.3" height="12.3" fill="#efefef" stroke="#e8e8e8" stroke-width="0.5"/>
<rect x="154.1" y="459.0" width="8.1" height="13.5" fill="#efefef" stroke="#e8e8e8" stroke-width="0.5"/>
<rect x="263.0" y="409.0" width="8.6" height="14.7" fill="#efefef" stroke="#e8e8e8" stroke-width="0.5"/>
<rect x="272.5" y="413.3" width="4.6" height="10.7" fill="#efefef" stroke="#e8e8e8" stroke-width="0.5"/>
<rect x="278.8" y="409.8" width="7.2" height="14.2" fill="#efefef" stroke="#e8e8e8" stroke-width="0.5"/>
<rect x="286.9" y="413.1" width="4.5" height="10.9" fill="#efefef" stroke="#e8e8e8" stroke-width="0.5"/>
<rect x="292.3" y="409.0" width="5.6" height="12.4" fill="#efefef" stroke="#e8e8e8" stroke-width="0.5"/>
<rect x="298.9" y="409.0" width="5.4" height="13.7" fill="#efefef" stroke="#e8e8e8" stroke-width="0.5"/>
<rect x="305.3" y="411.2" width="3.7" height="12.8" fill="#efefef" stroke="#e8e8e8" stroke-width="0.5"/>
<rect x="268.0" y="453.0" width="4.2" height="42.0" fill="#efefef" stroke="#e8e8e8" stroke-width="0.5"/>
<rect x="273.8" y="457.5" width="5.7" height="46.5" fill="#efefef" stroke="#e8e8e8" stroke-width="0.5"/>
<rect x="327" y="409" width="10" height="15" fill="#efefef" stroke="#e8e8e8" stroke-width="0.5"/>
<rect x="320.0" y="466.4" width="8.3" height="43.6" fill="#efefef" stroke="#e8e8e8" stroke-width="0.5"/>
<rect x="329.1" y="464.4" width="3.9" height="45.6" fill="#efefef" stroke="#e8e8e8" stroke-width="0.5"/>
<rect x="296.0" y="515.0" width="4.0" height="16.9" fill="#efefef" stroke="#e8e8e8" stroke-width="0.5"/>
<rect x="301.7" y="515.0" width="4.9" height="17.0" fill="#efefef" stroke="#e8e8e8" stroke-width="0.5"/>
<rect x="308.4" y="515.0" width="5.3" height="19.7" fill="#efefef" stroke="#e8e8e8" stroke-width="0.5"/>
<rect x="314.6" y="515.0" width="7.5" height="17.0" fill="#efefef" stroke="#e8e8e8" stroke-width="0.5"/>
<rect x="348.0" y="407.3" width="4.4" height="19.7" fill="#efefef" stroke="#e8e8e8" stroke-width="0.5"/>
<rect x="354.1" y="406.0" width="7.1" height="16.9" fill="#efefef" stroke="#e8e8e8" stroke-width="0.5"/>
<rect x="362.4" y="411.8" width="8.5" height="15.2" fill="#efefef" stroke="#e8e8e8" stroke-width="0.5"/>
<rect x="371.5" y="410.6" width="5.0" height="16.4" fill="#efefef" stroke="#e8e8e8" stroke-width="0.5"/>
<rect x="377.8" y="406.0" width="5.9" height="20.3" fill="#efefef" stroke="#e8e8e8" stroke-width="0.5"/>
<rect x="385.0" y="407.5" width="6.7" height="19.5" fill="#efefef" stroke="#e8e8e8" stroke-width="0.5"/>
<rect x="393.1" y="406.0" width="5.7" height="16.8" fill="#efefef" stroke="#e8e8e8" stroke-width="0.5"/>
<rect x="400.6" y="406.0" width="7.3" height="19.4" fill="#efefef" stroke="#e8e8e8" stroke-width="0.5"/>
<rect x="409.2" y="406.0" width="7.8" height="18.3" fill="#efefef" stroke="#e8e8e8" stroke-width="0.5"/>
<rect x="351.0" y="449.0" width="8.4" height="21.6" fill="#efefef" stroke="#e8e8e8" stroke-width="0.5"/>
<rect x="360.4" y="449.0" width="3.6" height="26.7" fill="#efefef" stroke="#e8e8e8" stroke-width="0.5"/>
<rect x="389" y="449" width="8" height="9" fill="#efefef" stroke="#e8e8e8" stroke-width="0.5"/>
<rect x="403.0" y="452.8" width="5.2" height="11.2" fill="#efefef" stroke="#e8e8e8" stroke-width="0.5"/>
<rect x="409.1" y="453.4" width="5.6" height="10.6" fill="#efefef" stroke="#e8e8e8" stroke-width="0.5"/>
<rect x="430.0" y="406.0" width="4.5" height="17.8" fill="#efefef" stroke="#e8e8e8" stroke-width="0.5"/>
<rect x="435.6" y="407.1" width="8.4" height="16.9" fill="#efefef" stroke="#e8e8e8" stroke-width="0.5"/>
<rect x="436" y="471" width="8" height="18" fill="#efefef" stroke="#e8e8e8" stroke-width="0.5"/>
<rect x="409" y="518" width="12" height="22" fill="#f9f0e5"/><rect x="437" y="500" width="7" height="40" fill="#f9f0e5"/>
<rect x="426" y="202" width="14" height="18" fill="#f8ede1"/>
<polygon points="0,58.5 444,52.6 444,66.5 0,72.5" fill="#e9e9e9"/>
<polygon points="0,59.2 444,53.3 444,65.8 0,71.8" fill="#ffffff"/>
<polygon points="0,146.9 444,140.9 444,148.8 0,154.8" fill="#e9e9e9"/>
<polygon points="0,147.6 444,141.6 444,148.1 0,154.1" fill="#ffffff"/>
<polygon points="0,189.4 444,183.4 444,189.8 0,195.8" fill="#e9e9e9"/>
<polygon points="0,190.1 444,184.1 444,189.1 0,195.1" fill="#ffffff"/>
<polygon points="0,230.5 444,224.5 444,232.4 0,238.3" fill="#e9e9e9"/>
<polygon points="0,231.2 444,225.2 444,231.7 0,237.7" fill="#ffffff"/>
<polygon points="0,272.8 81.548,271.7 81.548,278.1 0,279.2" fill="#e9e9e9"/>
<polygon points="0,273.5 81.548,272.4 81.548,277.4 0,278.5" fill="#ffffff"/>
<polygon points="251.64800000000002,269.4 444,266.8 444,273.2 251.64800000000002,275.8" fill="#e9e9e9"/>
<polygon points="251.64800000000002,270.1 444,267.5 444,272.5 251.64800000000002,275.1" fill="#ffffff"/>
<polygon points="0,312.4 444,306.4 444,319.3 0,325.2" fill="#e9e9e9"/>
<polygon points="0,313.1 444,307.1 444,318.6 0,324.6" fill="#ffffff"/>
<polygon points="62,400.9 444,395.8 444,402.7 62,407.8" fill="#e9e9e9"/>
<polygon points="62,401.6 444,396.5 444,402.0 62,407.1" fill="#ffffff"/>
<polygon points="0,442.9 85.4672,441.8 85.4672,448.7 0,449.8" fill="#e9e9e9"/>
<polygon points="0,443.6 85.4672,442.5 85.4672,448.0 0,449.1" fill="#ffffff"/>
<polygon points="0,482.9 86.3872,481.8 86.3872,488.7 0,489.8" fill="#e9e9e9"/>
<polygon points="0,483.6 86.3872,482.5 86.3872,488.0 0,489.1" fill="#ffffff"/>
<polygon points="0,523.3 87.3164,522.2 87.3164,529.1 0,530.2" fill="#e9e9e9"/>
<polygon points="0,524.0 87.3164,522.9 87.3164,528.4 0,529.5" fill="#ffffff"/>
<g transform="translate(350,507) rotate(-17.5)"><rect x="0" y="-12" width="9" height="11" fill="#efefef" stroke="#e8e8e8" stroke-width="0.5"/><rect x="10" y="-14" width="8" height="13" fill="#efefef" stroke="#e8e8e8" stroke-width="0.5"/><rect x="19" y="-13" width="10" height="12" fill="#efefef" stroke="#e8e8e8" stroke-width="0.5"/><rect x="30" y="-12" width="7" height="11" fill="#efefef" stroke="#e8e8e8" stroke-width="0.5"/><rect x="38" y="-15" width="9" height="14" fill="#efefef" stroke="#e8e8e8" stroke-width="0.5"/><rect x="48" y="-13" width="8" height="12" fill="#efefef" stroke="#e8e8e8" stroke-width="0.5"/><rect x="60" y="-14" width="12" height="13" fill="#efefef" stroke="#e8e8e8" stroke-width="0.5"/></g>
<polygon points="300,535.9 444,490.9 444,503.2 300,549.1" fill="#e9e9e9"/>
<polygon points="300,536.6 444,491.6 444,502.5 300,548.4" fill="#ffffff"/>
<polygon points="71.0,0 79.4,0 91.8,540 83.4,540" fill="#e9e9e9"/>
<polygon points="71.7,0 78.7,0 91.1,540 84.1,540" fill="#ffffff"/>
<polygon points="240.9,0 249.8,0 262.2,540 253.3,540" fill="#e9e9e9"/>
<polygon points="241.6,0 249.1,0 261.5,540 254.0,540" fill="#ffffff"/>
<polygon points="410.8,0 419.2,0 426.5,318.8 418.1,318.8" fill="#e9e9e9"/>
<polygon points="411.5,0 418.5,0 425.8,318.8 418.8,318.8" fill="#ffffff"/>
<polygon points="420.1,402.2 428.5,402.2 431.6,540 423.2,540" fill="#e9e9e9"/>
<polygon points="420.8,402.2 427.8,402.2 430.9,540 423.9,540" fill="#ffffff"/>
<polygon points="167.1,402.2 174.5,402.2 177.6,540 170.2,540" fill="#e9e9e9"/>
<polygon points="167.8,402.2 173.8,402.2 176.9,540 170.9,540" fill="#ffffff"/>
<polygon points="335.4,402.2 343.3,402.2 346.9,560 339.0,560" fill="#e9e9e9"/>
<polygon points="336.1,402.2 342.6,402.2 346.2,560 339.7,560" fill="#ffffff"/>
<path d="M0,326.7 C60,327.5 150,328.5 200,330 C210,331 214,336 222,336.5 L444,334 L444,346 L330,347 L176,350.2 C120,351.8 60,356 0,365.9 L0,353 C60,345 120,339.5 176,338.6 C120,338 60,338 0,338 Z" fill="#fde699" stroke="#f8d488" stroke-width="0.6"/>
<path d="M0,384.7 C60,376 120,372.5 196,370 L444,365.5 L444,377.5 L150,381.8 C120,383 100,386 80,392 C50,401 25,411 0,419.5 L0,410.5 C20,404 40,397.5 70,391 C90,387 110,384 126,382.5 C100,385 60,389 0,396.7 Z" fill="#fde699" stroke="#f8d488" stroke-width="0.6"/>
<polygon points="79.1,320 86.1,320 88.5,425 81.5,425" fill="#ffffff" stroke="#e9e9e9" stroke-width="0.7"/>
<polygon points="248.9,320 256.4,320 258.8,425 251.3,425" fill="#ffffff" stroke="#e9e9e9" stroke-width="0.7"/>
<polyline points="249.3,225 249,316.2 0,320.1" fill="none" stroke="#5aa0e9" stroke-width="2.2" stroke-linejoin="round"/>
<polyline points="0,486.4 85.7,485.6 84.9,404.9 176,401.8 255,400.2 255.4,440" fill="none" stroke="#5aa0e9" stroke-width="2.2" stroke-linejoin="round"/>
<g transform="translate(75,24) rotate(0)"><path d="M0,-4 L-2.6,-1 L-0.8,-1 L-0.8,4 L0.8,4 L0.8,-1 L2.6,-1 Z" fill="#aab4bc"/></g>
<g transform="translate(244.7,20.6) rotate(180)"><path d="M0,-4 L-2.6,-1 L-0.8,-1 L-0.8,4 L0.8,4 L0.8,-1 L2.6,-1 Z" fill="#aab4bc"/></g>
<g transform="translate(164.3,148) rotate(270)"><path d="M0,-4 L-2.6,-1 L-0.8,-1 L-0.8,4 L0.8,4 L0.8,-1 L2.6,-1 Z" fill="#aab4bc"/></g>
<g transform="translate(334,146.2) rotate(270)"><path d="M0,-4 L-2.6,-1 L-0.8,-1 L-0.8,4 L0.8,4 L0.8,-1 L2.6,-1 Z" fill="#aab4bc"/></g>
<g transform="translate(79.3,191.4) rotate(0)"><path d="M0,-4 L-2.6,-1 L-0.8,-1 L-0.8,4 L0.8,4 L0.8,-1 L2.6,-1 Z" fill="#aab4bc"/></g>
<g transform="translate(249.8,189.5) rotate(180)"><path d="M0,-4 L-2.6,-1 L-0.8,-1 L-0.8,4 L0.8,4 L0.8,-1 L2.6,-1 Z" fill="#aab4bc"/></g>
<g transform="translate(164.3,233.2) rotate(90)"><path d="M0,-4 L-2.6,-1 L-0.8,-1 L-0.8,4 L0.8,4 L0.8,-1 L2.6,-1 Z" fill="#aab4bc"/></g>
<g transform="translate(334.1,230.9) rotate(90)"><path d="M0,-4 L-2.6,-1 L-0.8,-1 L-0.8,4 L0.8,4 L0.8,-1 L2.6,-1 Z" fill="#aab4bc"/></g>
<g transform="translate(352,314.3) rotate(270)"><path d="M0,-4 L-2.6,-1 L-0.8,-1 L-0.8,4 L0.8,4 L0.8,-1 L2.6,-1 Z" fill="#aab4bc"/></g>
<g transform="translate(297.4,399.5) rotate(90)"><path d="M0,-4 L-2.6,-1 L-0.8,-1 L-0.8,4 L0.8,4 L0.8,-1 L2.6,-1 Z" fill="#aab4bc"/></g>
<g transform="translate(380.5,397.6) rotate(90)"><path d="M0,-4 L-2.6,-1 L-0.8,-1 L-0.8,4 L0.8,4 L0.8,-1 L2.6,-1 Z" fill="#aab4bc"/></g>
<g transform="translate(341.9,478.8) rotate(0)"><path d="M0,-4 L-2.6,-1 L-0.8,-1 L-0.8,4 L0.8,4 L0.8,-1 L2.6,-1 Z" fill="#aab4bc"/></g>
<g transform="translate(424.4,405) rotate(0)"><path d="M0,-4 L-2.6,-1 L-0.8,-1 L-0.8,4 L0.8,4 L0.8,-1 L2.6,-1 Z" fill="#aab4bc"/></g>
<g transform="translate(425.5,449) rotate(0)"><path d="M0,-4 L-2.6,-1 L-0.8,-1 L-0.8,4 L0.8,4 L0.8,-1 L2.6,-1 Z" fill="#aab4bc"/></g>
<g transform="translate(257,481) rotate(180)"><path d="M0,-4 L-2.6,-1 L-0.8,-1 L-0.8,4 L0.8,4 L0.8,-1 L2.6,-1 Z" fill="#aab4bc"/></g>
<text x="40" y="69.6" font-size="10.3" fill="#60666b" stroke="#fff" stroke-width="1.4" stroke-linejoin="round" paint-order="stroke" transform="rotate(-0.8 40 69.6)">W Jackson Blvd</text>
<text x="209.4" y="66.5" font-size="10.3" fill="#60666b" stroke="#fff" stroke-width="1.4" stroke-linejoin="round" paint-order="stroke" transform="rotate(-0.8 209.4 66.5)">W Jackson Blvd</text>
<text x="379" y="62.7" font-size="10.3" fill="#60666b" stroke="#fff" stroke-width="1.4" stroke-linejoin="round" paint-order="stroke" transform="rotate(-0.8 379 62.7)">W Jackson Blvd</text>
<text x="73" y="76.8" font-size="8" fill="#60666b" stroke="#fff" stroke-width="1.4" stroke-linejoin="round" paint-order="stroke" transform="rotate(88.7 73 76.8)">S Kildare Ave</text>
<text x="244" y="73.5" font-size="8" fill="#60666b" stroke="#fff" stroke-width="1.4" stroke-linejoin="round" paint-order="stroke" transform="rotate(88.7 244 73.5)">S Keeler Ave</text>
<text x="411" y="-6.5" font-size="8" fill="#60666b" stroke="#fff" stroke-width="1.4" stroke-linejoin="round" paint-order="stroke" transform="rotate(88.7 411 -6.5)">S Karlov Ave</text>
<text x="89" y="153.4" font-size="7.9" fill="#60666b" stroke="#fff" stroke-width="1.4" stroke-linejoin="round" paint-order="stroke" transform="rotate(-0.8 89 153.4)">W Gladys Ave</text>
<text x="259.5" y="149.3" font-size="7.9" fill="#60666b" stroke="#fff" stroke-width="1.4" stroke-linejoin="round" paint-order="stroke" transform="rotate(-0.8 259.5 149.3)">W Gladys Ave</text>
<text x="433" y="146" font-size="7.9" fill="#60666b" stroke="#fff" stroke-width="1.4" stroke-linejoin="round" paint-order="stroke" transform="rotate(-0.8 433 146)">W Gladys Ave</text>
<text x="92" y="236.7" font-size="8" fill="#60666b" stroke="#fff" stroke-width="1.4" stroke-linejoin="round" paint-order="stroke" transform="rotate(-0.8 92 236.7)">W Van Buren St</text>
<text x="261.8" y="234" font-size="8" fill="#60666b" stroke="#fff" stroke-width="1.4" stroke-linejoin="round" paint-order="stroke" transform="rotate(-0.8 261.8 234)">W Van Buren St</text>
<text x="434" y="231" font-size="8" fill="#60666b" stroke="#fff" stroke-width="1.4" stroke-linejoin="round" paint-order="stroke" transform="rotate(-0.8 434 231)">W Van Buren St</text>
<text x="80" y="260" font-size="8" fill="#60666b" stroke="#fff" stroke-width="1.4" stroke-linejoin="round" paint-order="stroke" transform="rotate(88.7 80 260)">S Kildare Ave</text>
<text x="417.5" y="256" font-size="7.9" fill="#60666b" stroke="#fff" stroke-width="1.4" stroke-linejoin="round" paint-order="stroke" transform="rotate(88.7 417.5 256)">S Karlov Ave</text>
<text x="68.8" y="323" font-size="10" fill="#60666b" stroke="#fff" stroke-width="0" stroke-linejoin="round" paint-order="stroke" transform="rotate(-0.8 68.8 323)">W Congress Pkwy</text>
<text x="230.5" y="320.3" font-size="10" fill="#60666b" stroke="#fff" stroke-width="0" stroke-linejoin="round" paint-order="stroke" transform="rotate(-0.8 230.5 320.3)">W Congress Pkwy</text>
<text x="391.3" y="317.4" font-size="10" fill="#60666b" stroke="#fff" stroke-width="1.4" stroke-linejoin="round" paint-order="stroke" transform="rotate(-0.8 391.3 317.4)">W Congress Pkwy</text>
<text x="80.8" y="340" font-size="8" fill="#60666b" stroke="#fff" stroke-width="1.4" stroke-linejoin="round" paint-order="stroke" transform="rotate(88.7 80.8 340)">S Kildare Ave</text>
<text x="249" y="327" font-size="8" fill="#60666b" stroke="#fff" stroke-width="1.4" stroke-linejoin="round" paint-order="stroke" transform="rotate(88.7 249 327)">S Keeler Ave</text>
<text x="97.1" y="407.4" font-size="7.9" fill="#60666b" stroke="#fff" stroke-width="0" stroke-linejoin="round" paint-order="stroke" transform="rotate(-0.8 97.1 407.4)">W Harrison St</text>
<text x="168" y="412.9" font-size="8.2" fill="#60666b" stroke="#fff" stroke-width="1.4" stroke-linejoin="round" paint-order="stroke" transform="rotate(88.7 168 412.9)">S Tripp Ave</text>
<text x="337" y="410.3" font-size="7.9" fill="#60666b" stroke="#fff" stroke-width="1.4" stroke-linejoin="round" paint-order="stroke" transform="rotate(88.7 337 410.3)">S Kedvale Ave</text>
<text x="83" y="491.5" font-size="7.9" fill="#60666b" stroke="#fff" stroke-width="1.4" stroke-linejoin="round" paint-order="stroke" transform="rotate(88.7 83 491.5)">S Kildare Ave</text>
<text x="421" y="510.8" font-size="7.9" fill="#60666b" stroke="#fff" stroke-width="1.4" stroke-linejoin="round" paint-order="stroke" transform="rotate(88.7 421 510.8)">S Karlov Ave</text>
<text x="252" y="411.6" font-size="8" fill="#60666b" stroke="#fff" stroke-width="1.4" stroke-linejoin="round" paint-order="stroke" transform="rotate(88.7 252 411.6)">S Keeler Ave</text>
<text x="403.5" y="508.5" font-size="10" fill="#60666b" stroke="#fff" stroke-width="1.4" stroke-linejoin="round" paint-order="stroke" transform="rotate(-17.5 403.5 508.5)">W 5th Ave</text>
<g transform="translate(123.8,341.2)"><path d="M2,0 H13.4 Q15.4,0 15.4,2 V6.6 Q15.4,8.6 13.4,8.6 H2 Q0,8.6 0,6.6 V2 Q0,0 2,0 Z" fill="#fff" stroke="#9aa0a4" stroke-width="0.9"/><text x="7.7" y="6.9" font-size="6.6" text-anchor="middle" fill="#4a4f53" font-weight="bold">110</text></g>
<g transform="translate(223,338.5)"><rect width="11" height="8.8" fill="#2d9b5a"/><rect x="1.2" y="1.2" width="8.6" height="6.4" fill="#7f8a86"/><text x="5.5" y="6.8" font-size="5.5" text-anchor="middle" fill="#fff">25</text></g>
<g opacity="0.25"><circle cx="161.6" cy="181.5" r="15.5" fill="#8a9aa6"/></g>
<path d="M156.7,192.0 L161,215.1 L165.3,192.0 Z" fill="#f03a53" stroke="#fff" stroke-width="1.6" stroke-linejoin="round"/>
<circle cx="161" cy="180.5" r="14.4" fill="#f03a53" stroke="#fff" stroke-width="1.3"/>
<path d="M157.6,192.5 L161,214.1 L164.4,192.5 Z" fill="#f03a53"/>
<circle cx="161" cy="180.5" r="10" fill="#fff"/>
<text x="161" y="184.9" font-size="12.5" text-anchor="middle" fill="#f03a53" font-family="Liberation Serif">9</text>
<g opacity="0.25"><circle cx="356.1" cy="155.5" r="15.5" fill="#8a9aa6"/></g>
<path d="M351.2,166.0 L355.5,187.1 L359.8,166.0 Z" fill="#f03a53" stroke="#fff" stroke-width="1.6" stroke-linejoin="round"/>
<circle cx="355.5" cy="154.5" r="14.4" fill="#f03a53" stroke="#fff" stroke-width="1.3"/>
<path d="M352.1,166.5 L355.5,186.1 L358.9,166.5 Z" fill="#f03a53"/>
<circle cx="355.5" cy="154.5" r="10" fill="#fff"/>
<text x="355.5" y="158.9" font-size="12.5" text-anchor="middle" fill="#f03a53" font-family="Liberation Serif">6</text>
<g opacity="0.25"><circle cx="175.9" cy="283.3" r="15.5" fill="#8a9aa6"/></g>
<path d="M171.0,293.8 L175.3,315.1 L179.60000000000002,293.8 Z" fill="#4e95e8" stroke="#fff" stroke-width="1.6" stroke-linejoin="round"/>
<circle cx="175.3" cy="282.3" r="14.4" fill="#4e95e8" stroke="#fff" stroke-width="1.3"/>
<path d="M171.9,294.3 L175.3,314.1 L178.70000000000002,294.3 Z" fill="#4e95e8"/>
<circle cx="175.3" cy="282.3" r="10" fill="#fff"/>
<text x="175.3" y="286.7" font-size="12.5" text-anchor="middle" fill="#4e95e8" font-family="Liberation Serif">3</text>
<g opacity="0.25"><circle cx="370.8" cy="283" r="15.5" fill="#8a9aa6"/></g>
<path d="M365.9,293.5 L370.2,313.3 L374.5,293.5 Z" fill="#1fc15f" stroke="#fff" stroke-width="1.6" stroke-linejoin="round"/>
<circle cx="370.2" cy="282" r="14.4" fill="#1fc15f" stroke="#fff" stroke-width="1.3"/>
<path d="M366.8,294 L370.2,312.3 L373.59999999999997,294 Z" fill="#1fc15f"/>
<circle cx="370.2" cy="282" r="10" fill="#fff"/>
<text x="370.2" y="286.4" font-size="12.5" text-anchor="middle" fill="#1fc15f" font-family="Liberation Serif">7</text>
<g opacity="0.25"><circle cx="84.6" cy="372.5" r="15.5" fill="#8a9aa6"/></g>
<path d="M79.7,383.0 L84,403.7 L88.3,383.0 Z" fill="#4e95e8" stroke="#fff" stroke-width="1.6" stroke-linejoin="round"/>
<circle cx="84" cy="371.5" r="14.4" fill="#4e95e8" stroke="#fff" stroke-width="1.3"/>
<path d="M80.6,383.5 L84,402.7 L87.4,383.5 Z" fill="#4e95e8"/>
<circle cx="84" cy="371.5" r="10" fill="#fff"/>
<text x="84" y="375.9" font-size="12" text-anchor="middle" fill="#4e95e8" font-family="Liberation Serif">11</text>
<g opacity="0.25"><circle cx="385.40000000000003" cy="431" r="15.5" fill="#8a9aa6"/></g>
<path d="M380.5,441.5 L384.8,461.2 L389.1,441.5 Z" fill="#4e95e8" stroke="#fff" stroke-width="1.6" stroke-linejoin="round"/>
<circle cx="384.8" cy="430" r="14.4" fill="#4e95e8" stroke="#fff" stroke-width="1.3"/>
<path d="M381.40000000000003,442 L384.8,460.2 L388.2,442 Z" fill="#4e95e8"/>
<circle cx="384.8" cy="430" r="10" fill="#fff"/>
<text x="384.8" y="434.4" font-size="12.5" text-anchor="middle" fill="#4e95e8" font-family="Liberation Serif">1</text>
<circle cx="454" cy="282" r="14.4" fill="#6f777b" stroke="#fff" stroke-width="1.3"/>
<g opacity="0.25"><circle cx="250.1" cy="214" r="16.5" fill="#8a9aa6"/></g>
<path d="M238.7,223.5 Q247.5,231 249.5,240 Q251.5,231 260.3,223.5 Z" fill="#4e95e8"/>
<circle cx="249.5" cy="213" r="15" fill="#4e95e8"/>
<g opacity="0.25"><circle cx="257.20000000000005" cy="450.5" r="17.0" fill="#8a9aa6"/></g>
<path d="M245.44000000000003,460.35 Q252.60000000000002,468.0 256.6,475.2 Q260.6,468.0 267.76000000000005,460.35 Z" fill="#4e95e8"/>
<circle cx="256.6" cy="449.5" r="15.5" fill="#4e95e8"/>
<g transform="translate(242.5,208.5)" fill="#fff"><rect x="0" y="0" width="9" height="8" rx="0.6"/><path d="M9.6,2.2 H12.3 L14.5,5 V8 H9.6 Z"/><circle cx="2.6" cy="9" r="1.6"/><circle cx="11.6" cy="9" r="1.6"/></g>
<g transform="translate(252.6,444)" fill="#fff"><rect x="0" y="0" width="1.5" height="11.6"/><path d="M1.5,0.4 C4,-0.6 5.5,1.6 9.4,0.6 V6.4 C5.5,7.4 4,5.2 1.5,6.2 Z"/></g></svg></div>
</div>
</body></html>
